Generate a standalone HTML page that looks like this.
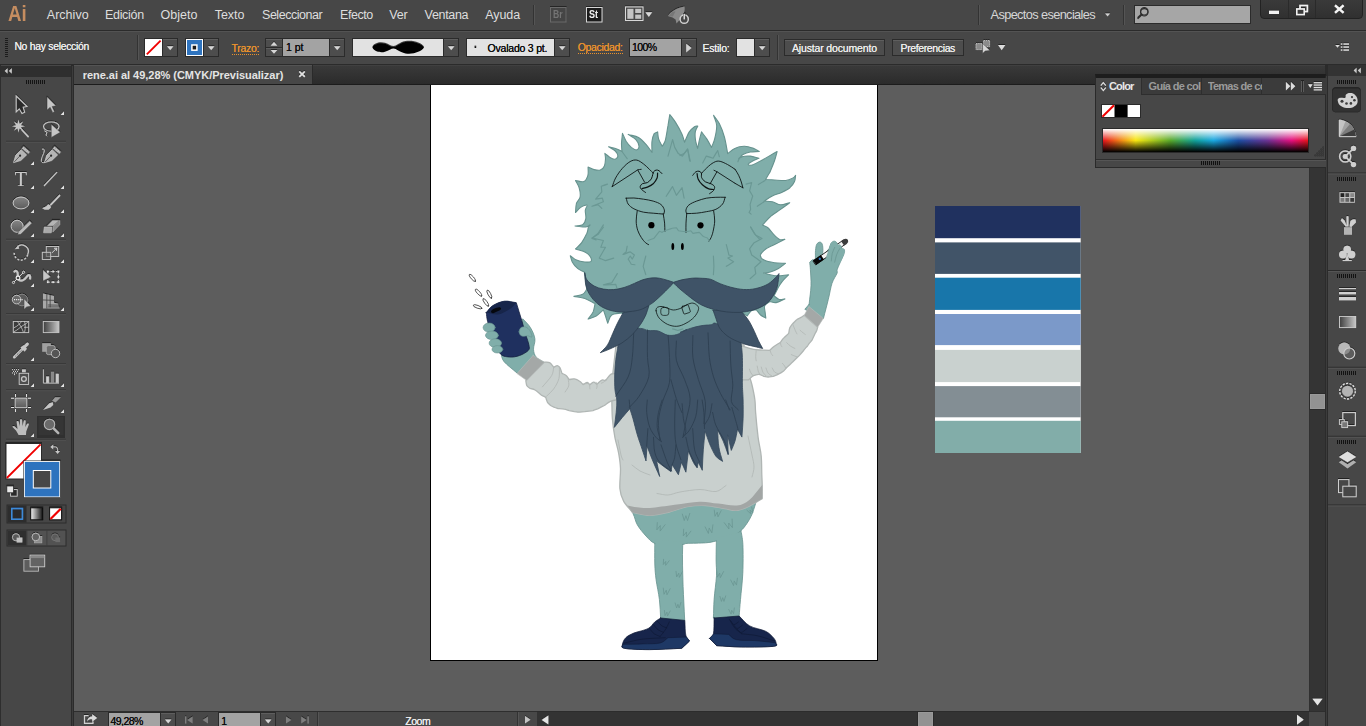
<!DOCTYPE html>
<html lang="es">
<head>
<meta charset="utf-8">
<title>rene.ai al 49,28% (CMYK/Previsualizar)</title>
<style>
*{box-sizing:border-box;margin:0;padding:0}
html,body{width:1366px;height:726px;overflow:hidden;background:#5d5d5d}
body{position:relative;font-family:"Liberation Sans",sans-serif;color:#e0e0e0;font-size:11px;-webkit-font-smoothing:antialiased}
.abs,.t,.bx{position:absolute}
.t{white-space:nowrap;line-height:1;display:block}
#menubar{left:0;top:0;width:1366px;height:30px;background:#474747}
#ctrlbar{left:0;top:30px;width:1366px;height:35px;background:#474747;border-top:1px solid #2b2b2b;border-bottom:1px solid #2b2b2b;box-shadow:inset 0 1px 0 #535353}
#tabrow{left:0;top:65px;width:1366px;height:20px;background:linear-gradient(#3a3a3a,#2b2b2b);border-bottom:1px solid #1c1c1c;box-shadow:inset 0 1px 0 #404040}
#tab{left:74px;top:65px;width:239px;height:19px;background:#474747;border-right:1px solid #2a2a2a;box-shadow:inset 0 1px 0 #545454}
#tools{left:0;top:65px;width:74px;height:661px;background:#474747;border-right:3px solid #2b2b2b;border-left:1px solid #2e2e2e}
#toolshead{left:1px;top:66px;width:70px;height:11px;background:#2f2f2f}
#canvas{left:74px;top:85px;width:1235px;height:626px;background:#5d5d5d}
#artboard{left:430px;top:84px;width:448px;height:577px;background:#fff;border:1px solid #000}
#status{left:74px;top:711px;width:1251px;height:15px;background:#484848;border-top:1px solid #2e2e2e}
#hscroll{left:537px;top:711px;width:772px;height:15px;background:#333;border-top:1px solid #2c2c2c}
#vscroll{left:1309px;top:85px;width:16px;height:626px;background:#343434;border-left:1px solid #303030}
#dock{left:1325px;top:65px;width:41px;height:661px;background:#474747;border-left:3px solid #2b2b2b}
#dockhead{left:1328px;top:65px;width:38px;height:11px;background:#333}
.thumb{background:#929292;border:1px solid #999;box-shadow:0 0 0 1px #2a2a2a}
.inp{background:#a3a3a3;border:1px solid #2b2b2b;color:#111}
.btn{background:#4d4d4d;border:1px solid #2b2b2b;box-shadow:inset 0 1px 0 #5e5e5e}
.lite{background:#e2e2e2;border:1px solid #2b2b2b}
.sep{width:1px;background:#333;box-shadow:1px 0 0 #555}
.menu{color:#dcdcdc;font-size:12.5px}
.lab{color:#e6e6e6;font-size:10px}
.or{color:#e8912d;font-size:10px;border-bottom:1px dotted #e8912d;padding-bottom:1px}
.dk{color:#101010;font-size:10px}
.b{font-weight:bold}
svg{position:absolute;left:0;top:0;overflow:visible}
</style>
</head>
<body>

<div id="canvas" class="abs"></div>
<div id="artboard" class="abs"></div>
<svg id="swatches" width="1366" height="726" viewBox="0 0 1366 726">
<rect x="935" y="206" width="145.7" height="247" fill="#fff"/>
<rect x="935" y="206" width="145.7" height="32.2" fill="#20315f"/>
<rect x="935" y="242.4" width="145.7" height="31.5" fill="#415468"/>
<rect x="935" y="277.7" width="145.7" height="32.2" fill="#1876aa"/>
<rect x="935" y="314" width="145.7" height="31.1" fill="#7b99c9"/>
<rect x="935" y="349.9" width="145.7" height="32.2" fill="#c9d1cf"/>
<rect x="935" y="386.1" width="145.7" height="31.2" fill="#838e94"/>
<rect x="935" y="420.8" width="145.7" height="32.2" fill="#82ada9"/>
</svg>
<svg id="monster" width="1366" height="726" viewBox="0 0 1366 726" stroke-linejoin="round" stroke-linecap="round">
<path d="M654.8 539.7C654.8 547.8 654.6 557.3 654.8 564.0C655.0 570.6 655.4 573.8 656.1 579.8C656.9 585.7 658.6 592.9 659.4 599.5C660.2 606.1 660.3 612.7 660.7 619.3C668.7 619.7 676.7 620.2 684.7 620.6C684.2 609.2 683.5 596.5 683.1 586.4C682.8 576.3 682.5 567.6 682.5 560.0C682.4 552.4 682.7 547.3 682.8 540.9C673.4 540.5 664.1 540.1 654.8 539.7Z" fill="#80aeaa" stroke="#66928e" stroke-width="0.8"/>
<path d="M716.4 537.2C716.3 544.8 716.1 553.6 716.1 560.0C716.1 566.4 716.8 569.2 716.5 575.8C716.1 582.4 714.6 592.5 714.1 599.5C713.6 606.6 713.7 611.8 713.4 618.0C722.0 617.6 730.6 617.3 739.1 616.9C739.6 611.1 739.8 606.8 740.5 599.5C741.1 592.2 742.4 582.3 742.8 573.2C743.2 564.0 743.2 552.1 742.9 544.7C742.5 537.2 741.4 533.9 740.6 528.5C732.5 531.4 724.5 534.3 716.4 537.2Z" fill="#80aeaa" stroke="#66928e" stroke-width="0.8"/>
<path d="M624.9 499.9C627.6 504.4 630.9 509.4 633.0 513.6C635.1 517.7 635.2 521.0 637.3 524.8C639.5 528.5 643.1 532.9 646.0 536.0C649.0 539.1 651.0 541.9 654.8 543.4C658.5 545.0 663.8 545.1 668.5 545.3C673.1 545.5 679.7 544.7 682.8 544.4C685.9 544.1 683.3 543.7 687.1 543.4C691.0 543.2 700.9 543.2 705.8 542.8C710.7 542.4 712.2 541.9 716.4 540.9C720.5 540.0 726.6 538.9 730.7 537.2C734.7 535.5 737.9 533.3 740.6 531.0C743.3 528.7 745.0 526.2 746.9 523.5C748.7 520.8 750.4 518.1 751.8 514.8C753.3 511.5 754.3 507.3 755.6 503.6C755.6 500.7 755.6 497.8 755.6 494.9C732.8 492.8 708.9 488.7 687.1 488.7C665.3 488.7 645.6 492.8 624.9 494.9C624.9 496.6 624.9 498.2 624.9 499.9Z" fill="#80aeaa" stroke="#66928e" stroke-width="0.8"/>
<path d="M655.4 539.7C664.3 540.3 673.2 540.9 682.1 541.6C682.1 544.3 682.1 547.0 682.1 549.7C673.2 549.7 664.3 549.7 655.4 549.7C655.4 546.3 655.4 543.0 655.4 539.7Z" fill="#80aeaa"/>
<path d="M717.0 537.8C724.7 536.0 732.3 534.1 740.0 532.2C740.6 537.6 741.3 543.0 741.9 548.4C733.6 548.4 725.3 548.4 717.0 548.4C717.0 544.9 717.0 541.4 717.0 537.8Z" fill="#80aeaa"/>
<path d="M660.7 618.0C658.8 619.3 656.9 620.2 654.8 621.9C652.7 623.7 651.7 626.7 648.2 628.5C644.7 630.4 637.5 631.6 633.7 633.1C630.0 634.7 627.7 635.9 625.8 637.7C623.9 639.6 622.7 642.6 622.5 644.3C622.3 646.1 620.0 647.4 624.5 648.3C629.0 649.2 640.0 649.6 649.5 649.6C659.1 649.6 671.1 648.7 681.8 648.3C684.4 645.9 686.9 643.5 689.5 641.0C688.2 639.1 686.5 638.6 685.8 635.1C685.0 631.7 685.2 625.3 684.8 620.4C676.8 619.6 668.8 618.8 660.7 618.0Z" fill="#17254b" stroke="#0e1833" stroke-width="0.7"/>
<path d="M622.9 644.3C623.4 645.7 620.1 647.4 624.5 648.3C628.9 649.2 640.0 649.6 649.5 649.6C659.1 649.6 671.1 648.7 681.8 648.3C684.4 645.9 686.9 643.5 689.5 641.0C688.5 639.7 687.6 638.4 686.7 637.1C680.5 637.3 674.2 637.5 668.0 637.7C665.3 639.5 664.2 642.0 660.1 643.0C655.9 644.0 649.1 643.7 642.9 643.9C636.7 644.2 629.6 644.2 622.9 644.3Z" fill="#1e3865" stroke="#0e1833" stroke-width="0.5"/>
<path d="M714.1 618.0C722.4 617.3 730.8 616.7 739.1 616.0C742.6 619.3 745.3 623.4 749.7 625.9C754.1 628.4 761.5 629.2 765.5 631.2C769.4 633.1 771.6 635.8 773.4 637.7C775.2 639.7 776.0 641.6 776.0 643.0C776.0 644.4 779.1 645.7 773.4 646.3C767.7 647.0 751.2 647.1 741.8 647.0C732.3 646.9 725.1 646.1 716.7 645.7C714.3 643.2 711.9 640.8 709.5 638.4C710.8 636.9 712.7 637.2 713.4 633.8C714.2 630.4 713.9 623.2 714.1 618.0Z" fill="#17254b" stroke="#0e1833" stroke-width="0.7"/>
<path d="M709.5 638.4C711.9 640.8 714.3 643.2 716.7 645.7C725.1 646.1 732.3 646.9 741.8 647.0C751.2 647.1 767.7 647.0 773.4 646.3C779.1 645.6 775.2 643.9 776.0 642.8C769.0 642.0 761.5 641.1 754.9 640.6C748.4 640.1 740.9 640.8 736.5 639.7C732.1 638.7 731.2 636.2 728.6 634.4C723.7 634.2 718.8 634.0 713.8 633.8C712.4 635.3 710.9 636.9 709.5 638.4Z" fill="#1e3865" stroke="#0e1833" stroke-width="0.5"/>
<path d="M649.5 628.5C651.1 630.3 652.4 632.5 654.1 633.8C655.9 635.1 658.1 635.5 660.1 636.4" fill="none" stroke="#0e1833" stroke-width="0.6"/>
<path d="M653.5 624.6C655.0 626.3 656.4 628.6 658.1 629.8C659.7 631.1 661.6 631.4 663.4 632.2" fill="none" stroke="#0e1833" stroke-width="0.6"/>
<path d="M657.4 621.3C659.0 622.8 660.5 624.8 662.0 625.9C663.6 627.0 665.1 627.2 666.7 627.9" fill="none" stroke="#0e1833" stroke-width="0.6"/>
<path d="M660.1 636.4C661.8 634.2 663.8 632.3 665.3 629.8C666.9 627.4 668.0 624.6 669.3 621.9" fill="none" stroke="#0e1833" stroke-width="0.6"/>
<path d="M624.5 643.0C630.6 641.7 636.1 639.9 642.9 639.1C649.8 638.2 657.9 638.2 665.3 637.7" fill="none" stroke="#0e1833" stroke-width="0.6"/>
<path d="M730.6 620.6C731.7 621.9 732.5 624.3 733.9 624.6C735.2 624.8 736.9 622.8 738.5 621.9" fill="none" stroke="#0e1833" stroke-width="0.6"/>
<path d="M733.9 625.2C735.0 626.3 735.7 628.5 737.2 628.5C738.6 628.5 740.7 626.3 742.4 625.2" fill="none" stroke="#0e1833" stroke-width="0.6"/>
<path d="M737.2 629.2C738.5 630.3 739.5 632.6 741.1 632.5C742.8 632.4 745.1 629.8 747.0 628.5" fill="none" stroke="#0e1833" stroke-width="0.6"/>
<path d="M729.3 619.3C731.2 622.4 733.1 626.1 735.2 628.5C737.3 630.9 739.6 632.0 741.8 633.8" fill="none" stroke="#0e1833" stroke-width="0.6"/>
<path d="M741.8 633.8C747.0 634.4 752.1 634.6 757.6 635.8C763.1 637.0 769.0 639.3 774.7 641.0" fill="none" stroke="#0e1833" stroke-width="0.6"/>
<path d="M-2.2 -2 L-1 2 L0 -1 L1 2 L2.4 -2.4" transform="translate(685.9 517.3) rotate(0) scale(1.625)" fill="none" stroke="#6b9793" stroke-width="0.85" vector-effect="non-scaling-stroke"/>
<path d="M-2.2 -2 L-1 2 L0 -1 L1 2 L2.4 -2.4" transform="translate(717.0 513.6) rotate(10) scale(1.5)" fill="none" stroke="#6b9793" stroke-width="0.85" vector-effect="non-scaling-stroke"/>
<path d="M-2.2 -2 L-1 2 L0 -1 L1 2 L2.4 -2.4" transform="translate(659.7 527.2) rotate(20) scale(1.75)" fill="none" stroke="#6b9793" stroke-width="0.85" vector-effect="non-scaling-stroke"/>
<path d="M-2.2 -2 L-1 2 L0 -1 L1 2 L2.4 -2.4" transform="translate(685.9 533.5) rotate(20) scale(1.625)" fill="none" stroke="#6b9793" stroke-width="0.85" vector-effect="non-scaling-stroke"/>
<path d="M-2.2 -2 L-1 2 L0 -1 L1 2 L2.4 -2.4" transform="translate(709.5 529.7) rotate(-10) scale(1.75)" fill="none" stroke="#6b9793" stroke-width="0.85" vector-effect="non-scaling-stroke"/>
<path d="M-2.2 -2 L-1 2 L0 -1 L1 2 L2.4 -2.4" transform="translate(729.4 524.8) rotate(-20) scale(1.875)" fill="none" stroke="#6b9793" stroke-width="0.85" vector-effect="non-scaling-stroke"/>
<path d="M-2.2 -2 L-1 2 L0 -1 L1 2 L2.4 -2.4" transform="translate(750.6 511.1) rotate(-30) scale(1.25)" fill="none" stroke="#6b9793" stroke-width="0.85" vector-effect="non-scaling-stroke"/>
<path d="M-2.2 -2 L-1 2 L0 -1 L1 2 L2.4 -2.4" transform="translate(665.3 562.6) rotate(20) scale(1.25)" fill="none" stroke="#6b9793" stroke-width="0.85" vector-effect="non-scaling-stroke"/>
<path d="M-2.2 -2 L-1 2 L0 -1 L1 2 L2.4 -2.4" transform="translate(678.5 574.5) rotate(10) scale(1.375)" fill="none" stroke="#6b9793" stroke-width="0.85" vector-effect="non-scaling-stroke"/>
<path d="M-2.2 -2 L-1 2 L0 -1 L1 2 L2.4 -2.4" transform="translate(666.0 591.6) rotate(10) scale(1.5)" fill="none" stroke="#6b9793" stroke-width="0.85" vector-effect="non-scaling-stroke"/>
<path d="M-2.2 -2 L-1 2 L0 -1 L1 2 L2.4 -2.4" transform="translate(677.9 605.5) rotate(0) scale(1.25)" fill="none" stroke="#6b9793" stroke-width="0.85" vector-effect="non-scaling-stroke"/>
<path d="M-2.2 -2 L-1 2 L0 -1 L1 2 L2.4 -2.4" transform="translate(666.7 613.4) rotate(10) scale(1.25)" fill="none" stroke="#6b9793" stroke-width="0.85" vector-effect="non-scaling-stroke"/>
<path d="M-2.2 -2 L-1 2 L0 -1 L1 2 L2.4 -2.4" transform="translate(719.4 574.5) rotate(10) scale(1.5)" fill="none" stroke="#6b9793" stroke-width="0.85" vector-effect="non-scaling-stroke"/>
<path d="M-2.2 -2 L-1 2 L0 -1 L1 2 L2.4 -2.4" transform="translate(734.5 582.4) rotate(-10) scale(1.5)" fill="none" stroke="#6b9793" stroke-width="0.85" vector-effect="non-scaling-stroke"/>
<path d="M-2.2 -2 L-1 2 L0 -1 L1 2 L2.4 -2.4" transform="translate(722.7 598.9) rotate(0) scale(1.25)" fill="none" stroke="#6b9793" stroke-width="0.85" vector-effect="non-scaling-stroke"/>
<path d="M-2.2 -2 L-1 2 L0 -1 L1 2 L2.4 -2.4" transform="translate(731.9 611.4) rotate(-10) scale(1.25)" fill="none" stroke="#6b9793" stroke-width="0.85" vector-effect="non-scaling-stroke"/>
<path d="M613.0 372.0C612.4 377.3 611.5 383.3 611.3 388.0C611.1 392.7 611.6 394.9 611.8 400.0C612.0 405.1 611.9 412.5 612.4 418.7C612.9 424.9 613.8 431.5 614.9 437.3C616.0 443.1 617.8 448.3 618.7 453.5C619.6 458.7 620.3 462.6 620.5 468.5C620.7 474.4 619.4 483.3 619.9 488.7C620.4 494.1 621.5 497.2 623.6 501.1C625.7 505.0 629.5 508.6 632.4 512.3C638.2 513.3 643.8 515.4 649.8 515.4C655.8 515.4 662.3 513.8 668.5 512.3C674.7 510.8 680.9 507.8 687.1 506.7C693.3 505.6 699.6 505.2 705.8 505.5C712.0 505.8 719.3 507.8 724.5 508.6C729.7 509.4 732.8 510.8 736.9 510.4C741.0 510.0 745.1 508.1 749.3 506.1C753.5 504.1 757.9 501.1 762.2 498.6C762.2 494.0 762.3 488.9 762.2 484.9C762.1 480.9 762.0 479.5 761.8 474.7C761.6 469.9 761.8 462.2 761.2 456.0C760.6 449.8 759.0 444.6 758.1 437.3C757.2 430.0 756.1 418.6 755.6 412.4C755.1 406.2 755.5 404.6 754.9 400.0C754.3 395.4 753.1 389.7 752.0 385.0C750.9 380.3 749.3 376.3 748.0 372.0C746.7 363.0 745.3 354.0 744.0 345.0C722.7 340.0 701.3 335.0 680.0 330.0C658.7 335.0 637.3 340.0 616.0 345.0C615.0 354.0 614.0 363.0 613.0 372.0Z" fill="#c9d0ce" stroke="#b0b6b4" stroke-width="1.3"/>
<path d="M627.5 505.5C630.7 506.1 633.3 506.9 637.0 507.3C640.7 507.7 643.5 508.4 649.8 508.0C656.1 507.6 666.4 505.9 674.7 504.8C683.0 503.8 692.4 501.9 699.6 501.7C706.9 501.5 712.0 503.0 718.2 503.6C724.4 504.2 731.7 506.1 736.9 505.5C742.1 504.9 745.1 503.3 749.3 499.9C753.5 496.5 757.9 489.9 762.2 484.9C762.2 489.5 762.2 494.0 762.2 498.6C757.9 501.1 753.5 504.1 749.3 506.1C745.1 508.1 741.0 510.0 736.9 510.4C732.8 510.8 729.7 509.4 724.5 508.6C719.3 507.8 712.0 505.8 705.8 505.5C699.6 505.2 693.3 505.6 687.1 506.7C680.9 507.8 674.7 510.8 668.5 512.3C662.3 513.8 655.8 515.3 649.8 515.4C643.8 515.5 638.2 513.5 632.4 512.6C630.8 510.2 629.1 507.9 627.5 505.5Z" fill="#a2a6a5"/>
<path d="M657.0 493.5C660.7 494.0 664.2 495.2 668.0 495.0C671.8 494.8 674.7 492.9 680.0 492.0C685.3 491.1 694.0 489.6 700.0 489.5C706.0 489.4 711.7 492.2 716.0 491.5C720.3 490.8 722.7 487.5 726.0 485.5" fill="none" stroke="#b0b6b4" stroke-width="0.8"/>
<path d="M632.0 465.0C634.7 467.0 637.0 469.3 640.0 471.0C643.0 472.7 646.7 473.7 650.0 475.0" fill="none" stroke="#b0b6b4" stroke-width="0.8"/>
<path d="M748.0 436.0C749.3 442.3 751.0 449.8 752.0 455.0C753.0 460.2 754.0 463.3 754.0 467.0C754.0 470.7 752.7 473.7 752.0 477.0" fill="none" stroke="#b0b6b4" stroke-width="0.8"/>
<path d="M618.0 440.0C619.0 445.0 620.2 451.7 621.0 455.0C621.8 458.3 622.3 458.3 623.0 460.0" fill="none" stroke="#b0b6b4" stroke-width="0.8"/>
<path d="M501.0 353.4C502.0 356.1 501.4 358.4 504.1 361.7C506.8 364.9 512.7 369.2 517.0 373.0C526.0 369.4 534.9 365.8 543.9 362.2C541.3 360.5 537.8 359.2 536.1 357.0C534.4 354.9 533.7 352.3 533.5 349.3C533.3 346.2 535.4 342.5 534.9 338.9C534.4 335.3 532.5 330.9 530.4 327.6C528.4 324.2 525.3 321.7 522.7 318.8C521.7 322.7 519.8 326.4 519.6 330.7C519.4 334.9 524.8 340.3 521.7 344.1C518.6 347.9 507.9 350.3 501.0 353.4Z" fill="#80aeaa" stroke="#66928e" stroke-width="0.8"/>
<path d="M486.3 312.5C486.7 315.5 486.6 317.3 487.6 321.4C488.6 325.5 490.4 331.7 492.5 337.0C494.6 342.3 497.2 350.1 500.0 353.4C502.8 356.7 506.0 356.6 509.3 357.0C512.6 357.4 516.4 356.6 519.6 355.5C522.8 354.4 526.9 352.0 528.4 350.3C529.9 348.6 529.3 347.7 528.9 345.1C528.5 342.5 527.0 338.9 525.8 334.8C524.6 330.7 523.3 325.7 521.7 320.3C520.1 314.9 518.1 308.6 516.3 302.7C512.3 302.2 508.3 300.7 504.4 301.2C500.5 301.7 496.0 303.6 493.0 305.5C490.0 307.4 488.5 310.2 486.3 312.5Z" fill="#1f305f" stroke="#14203f" stroke-width="0.8"/>
<path d="M486.3 312.5C488.5 310.2 490.0 307.4 493.0 305.5C496.0 303.6 500.5 301.7 504.4 301.2C508.3 300.7 512.3 302.2 516.3 302.7C514.2 304.8 513.0 307.0 510.0 309.0C506.9 311.0 501.9 313.9 498.0 314.5C494.1 315.1 490.2 313.2 486.3 312.5Z" fill="#17254a"/>
<path d="M491.0 311.5C491.2 310.8 492.6 309.5 494.0 308.8C495.4 308.1 498.3 307.2 499.5 307.3C500.7 307.4 501.4 308.6 501.0 309.3C500.6 310.0 498.3 310.9 497.0 311.6C495.7 312.3 494.0 313.3 493.0 313.3C492.0 313.3 490.8 312.2 491.0 311.5Z" fill="#05070d"/>
<ellipse cx="489.1" cy="327.6" rx="6.0" ry="4.6" fill="#80aeaa" stroke="#66928e" stroke-width="0.6"/>
<ellipse cx="491.9" cy="335.3" rx="6.4" ry="4.3" fill="#80aeaa" stroke="#66928e" stroke-width="0.6"/>
<ellipse cx="495.3" cy="343.1" rx="6.2" ry="4.3" fill="#80aeaa" stroke="#66928e" stroke-width="0.6"/>
<ellipse cx="497.4" cy="349.3" rx="5.4" ry="3.7" fill="#80aeaa" stroke="#66928e" stroke-width="0.6"/>
<path d="M519.1 331.7C519.2 330.4 520.0 328.3 521.1 327.6C522.3 326.8 524.3 326.5 525.8 327.0C527.3 327.6 528.9 329.0 529.9 330.7C531.0 332.3 532.3 336.0 532.0 336.9C531.6 337.7 529.2 335.9 527.9 335.8C526.5 335.7 524.9 336.4 523.7 336.3C522.5 336.3 521.4 336.1 520.6 335.3C519.9 334.5 519.0 333.0 519.1 331.7Z" fill="#80aeaa" stroke="#66928e" stroke-width="0.6"/>
<ellipse cx="472.4" cy="277.9" rx="4.6" ry="1.4" transform="rotate(50 472.4 277.9)" fill="#fff" stroke="#222" stroke-width="0.7"/>
<ellipse cx="478.6" cy="292.7" rx="4.6" ry="1.4" transform="rotate(48 478.6 292.7)" fill="#fff" stroke="#222" stroke-width="0.7"/>
<ellipse cx="489.4" cy="294.2" rx="4.6" ry="1.4" transform="rotate(62 489.4 294.2)" fill="#fff" stroke="#222" stroke-width="0.7"/>
<ellipse cx="485.8" cy="302.4" rx="4.6" ry="1.4" transform="rotate(55 485.8 302.4)" fill="#fff" stroke="#222" stroke-width="0.7"/>
<ellipse cx="477.6" cy="306.8" rx="4.6" ry="1.4" transform="rotate(20 477.6 306.8)" fill="#fff" stroke="#222" stroke-width="0.7"/>
<path d="M544.4 362.1C546.1 362.2 548.0 361.7 549.6 362.6C551.1 363.4 552.3 365.7 553.7 367.2C554.9 366.7 556.3 365.6 557.3 365.7C558.4 365.8 559.1 366.5 559.9 367.7C560.7 369.0 561.3 371.5 562.0 373.4C563.4 374.1 564.9 374.5 566.1 375.5C567.3 376.5 568.2 378.3 569.2 379.6C570.9 379.4 572.7 378.6 574.4 378.9C576.1 379.2 578.1 380.2 579.6 381.2C581.0 382.1 582.0 383.5 583.2 384.6C584.5 383.9 586.2 382.5 587.3 382.5C588.4 382.6 589.0 384.0 589.9 384.8C591.1 383.9 592.3 382.3 593.5 382.2C594.7 382.1 595.8 383.6 596.9 384.3C598.5 382.9 600.3 380.7 601.8 380.1C603.2 379.5 604.3 380.5 605.6 380.7C607.2 378.6 609.1 375.6 610.5 374.5C612.0 373.3 612.6 374.0 614.2 373.6C615.7 373.3 618.0 372.8 619.8 372.4C619.8 381.4 619.8 390.3 619.8 399.3C616.7 399.9 613.1 400.3 610.5 401.3C608.0 402.4 606.4 404.1 604.3 405.5C602.3 406.5 600.0 407.7 598.2 408.6C596.3 409.4 594.7 409.9 593.0 410.6C590.2 411.0 587.1 411.4 584.7 411.7C582.3 411.9 580.6 412.0 578.5 412.2C577.1 412.0 575.9 411.9 574.4 411.7C572.8 411.4 570.9 411.0 569.2 410.6C567.5 410.1 566.0 409.4 564.1 409.1C562.2 408.7 559.9 408.7 557.9 408.6C556.8 408.2 556.0 408.0 554.8 407.5C553.6 407.0 551.8 406.3 550.6 405.5C549.4 404.6 548.6 403.4 547.5 402.4C547.2 401.5 546.8 400.6 546.5 399.8C546.1 398.9 546.3 398.0 545.5 397.2C544.6 396.4 542.7 395.8 541.3 395.1C539.3 393.4 537.0 391.1 535.1 390.0C533.2 388.8 531.7 388.9 530.0 388.4C528.9 387.6 527.6 387.1 526.9 385.8C526.2 384.5 526.2 382.4 525.8 380.7C532.0 374.5 538.2 368.3 544.4 362.1Z" fill="#c9d0ce" stroke="#b0b6b4" stroke-width="1.3"/>
<path d="M533.1 355.4C536.8 357.7 540.6 360.0 544.4 362.3C538.5 368.3 532.6 374.4 526.7 380.5C523.5 378.2 520.3 375.9 517.0 373.6C522.4 367.5 527.7 361.4 533.1 355.4Z" fill="#a4a8a7" stroke="#b9bdbc" stroke-width="0.6"/>
<path d="M809.1 304.3C809.7 298.2 810.8 291.5 811.0 285.8C811.2 280.0 810.6 273.6 810.4 269.7C810.2 265.7 809.9 264.7 809.7 262.2C810.6 261.4 811.5 260.3 812.4 259.8C813.3 259.2 814.7 260.7 815.2 259.1C815.7 257.6 815.2 252.9 815.5 250.5C815.8 248.0 816.0 245.7 816.7 244.3C817.5 242.9 818.9 242.1 819.8 242.1C820.8 242.1 821.8 242.9 822.3 244.3C822.8 245.7 822.9 248.4 822.9 250.5C822.9 252.5 822.5 254.6 822.3 256.7C824.6 254.0 826.9 251.3 829.1 248.6C829.8 246.8 830.2 244.6 831.0 243.3C831.8 242.1 832.9 241.4 833.8 241.2C834.7 241.0 835.6 241.5 836.3 242.1C836.9 242.7 837.3 243.7 837.8 244.6C838.4 244.5 839.1 244.1 839.7 244.4C840.3 244.6 841.2 245.4 841.5 246.1C841.8 246.8 841.5 247.8 841.4 248.6C842.2 248.7 843.2 248.5 843.7 248.9C844.2 249.3 844.6 249.8 844.6 250.8C844.6 251.8 844.4 252.9 843.7 254.8C843.0 256.7 841.4 259.8 840.3 262.2C839.2 264.7 837.7 267.8 837.2 269.7C836.6 271.5 837.9 271.1 837.0 273.4C836.1 275.6 833.5 278.9 832.0 283.3C830.6 287.6 829.8 293.5 828.3 299.4C826.9 305.3 825.0 312.2 823.4 318.6C817.2 315.5 811.0 312.4 804.8 309.3C806.2 307.7 807.7 306.0 809.1 304.3Z" fill="#80aeaa" stroke="#66928e" stroke-width="0.8"/>
<path d="M741.2 345.8C746.0 347.1 750.9 348.9 755.7 349.6C760.4 350.4 765.0 350.0 769.6 350.3C771.2 348.9 772.5 347.7 774.3 346.3C776.1 345.0 778.4 343.6 780.5 342.2C781.5 340.8 782.2 339.5 783.6 338.1C784.9 336.6 787.0 335.0 788.7 333.4C789.1 331.5 789.2 329.3 789.8 327.7C790.4 326.2 791.5 325.3 792.3 324.1C793.9 322.6 795.5 320.6 797.0 319.5C798.5 318.3 799.9 318.1 801.1 317.4C802.3 316.7 803.2 316.0 804.2 315.3C808.7 319.3 813.2 323.3 817.7 327.2C817.3 328.4 817.1 329.8 816.6 330.8C816.2 331.9 815.6 332.6 815.1 333.4C814.6 334.6 814.0 335.9 813.5 337.0C813.0 338.1 812.5 339.1 812.0 340.1C811.1 341.2 810.2 342.2 809.4 343.2C808.6 344.3 808.0 345.3 807.3 346.3C806.6 347.0 805.9 347.6 805.3 348.4C804.6 349.2 803.9 350.1 803.2 351.0C802.2 352.2 801.1 353.5 800.1 354.6C799.1 355.7 798.0 356.7 797.0 357.7C795.6 359.1 794.6 360.2 792.9 361.8C791.1 363.5 788.7 365.6 786.7 367.5C785.6 368.7 784.9 370.0 783.6 371.1C782.2 372.2 780.1 373.4 778.4 374.2C776.7 375.1 774.9 375.6 773.2 376.3C771.5 376.5 769.6 377.0 768.1 377.0C766.5 377.0 765.3 376.5 763.9 376.3C762.2 375.7 760.3 374.6 758.8 374.4C757.2 374.3 756.0 375.0 754.6 375.3C753.9 375.6 753.6 375.5 752.6 376.3C751.5 377.1 749.8 378.7 748.4 379.9C746.0 379.9 743.6 379.9 741.2 379.9C741.2 368.5 741.2 357.2 741.2 345.8Z" fill="#c9d0ce" stroke="#b0b6b4" stroke-width="1.3"/>
<path d="M804.2 315.3C805.8 312.4 807.3 309.5 808.9 306.5C813.7 310.5 818.5 314.5 823.3 318.4C821.4 321.4 819.5 324.3 817.7 327.2C813.2 323.3 808.7 319.3 804.2 315.3Z" fill="#a4a8a7" stroke="#b9bdbc" stroke-width="0.6"/>
<g transform="translate(814.6 262.7) rotate(-34.6)"><rect x="0" y="-2.3" width="36" height="4.6" fill="#f4f4f4" stroke="#111" stroke-width="0.8"/><rect x="0" y="-2.8" width="9.5" height="5.6" fill="#050505"/><circle cx="6.5" cy="-0.2" r="1.2" fill="#2d6fb5"/><path d="M34 -2.6 L37 -2.9 Q40.5 -2 40.3 0.3 Q40 2.6 37 2.9 L34 2.6Z" fill="#3c3c3c"/></g>
<path d="M829.1 248.6C829.8 246.8 830.2 244.6 831.0 243.3C831.8 242.1 832.9 241.4 833.8 241.2C834.7 241.0 835.6 241.5 836.3 242.1C836.9 242.7 837.3 243.7 837.8 244.6C838.4 244.5 839.1 244.1 839.7 244.4C840.3 244.6 841.2 245.4 841.5 246.1C841.8 246.8 841.5 247.8 841.4 248.6C842.2 248.7 843.2 248.5 843.7 248.9C844.2 249.3 844.6 249.8 844.6 250.8C844.6 251.8 844.4 252.9 843.7 254.8C843.0 256.7 841.8 260.6 840.3 262.2C838.8 263.9 837.0 265.2 834.7 264.7C832.4 264.2 827.9 261.0 826.7 259.1C825.4 257.3 826.9 255.3 827.3 253.6C827.7 251.8 828.5 250.3 829.1 248.6Z" fill="#80aeaa"/>
<path d="M834.7 247.4C833.9 249.4 832.8 251.3 832.2 253.6C831.7 255.8 831.6 258.5 831.3 261.0" fill="none" stroke="#66928e" stroke-width="0.7"/>
<path d="M839.7 248.6C838.6 250.7 837.4 252.5 836.6 254.8C835.8 257.1 835.3 259.8 834.7 262.2" fill="none" stroke="#66928e" stroke-width="0.7"/>
<path d="M622.0 312.9C618.5 313.6 614.0 313.2 611.7 315.0C609.3 316.7 609.0 320.5 607.7 323.2C607.0 320.8 606.2 318.2 605.5 316.0C604.7 313.8 604.1 311.9 603.4 309.8C601.0 311.9 598.7 314.4 596.2 316.0C593.6 317.5 590.8 318.1 588.1 319.1C589.8 316.7 591.9 314.4 593.1 311.9C594.2 309.3 594.4 306.4 595.1 303.6C591.7 301.9 588.3 299.6 584.8 298.4C581.3 297.2 577.6 297.1 573.9 296.4C576.9 295.7 580.6 295.5 582.7 294.3C584.9 293.1 585.5 290.9 586.9 289.1C586.0 283.4 585.1 277.7 584.3 272.0C582.0 270.8 579.5 270.0 577.6 268.4C575.6 266.8 573.6 264.3 572.4 262.2C571.2 260.1 571.0 257.9 570.3 255.8C572.4 257.2 574.1 259.1 576.5 260.1C578.9 261.2 582.4 261.8 584.8 262.0C587.2 262.2 590.0 262.2 591.0 261.4C591.9 260.5 591.3 258.5 590.5 257.0C589.6 255.5 588.3 253.7 585.8 252.4C583.3 251.0 578.9 250.1 575.5 249.0C577.6 246.8 579.8 245.2 581.7 242.6C583.6 239.9 585.7 235.8 586.9 233.3C588.0 230.7 587.9 228.5 588.4 227.1C588.9 225.7 590.4 224.9 590.0 224.9C589.5 224.9 588.3 226.8 585.8 227.0C583.3 227.2 578.6 226.3 575.0 226.0C577.6 225.5 580.9 225.9 582.7 224.7C584.5 223.5 585.4 221.1 585.8 218.7C586.3 216.3 585.1 212.7 585.3 210.5C585.5 208.2 587.8 205.6 587.1 205.1C586.3 204.6 582.6 206.1 580.7 207.4C578.7 208.6 577.2 210.8 575.5 212.5C575.8 209.4 575.8 205.8 576.5 203.2C577.3 200.6 579.7 199.6 580.1 197.0C580.6 194.4 579.9 190.5 579.1 187.7C578.3 185.0 576.7 182.9 575.5 180.5C578.3 180.8 581.7 182.4 583.8 181.5C585.8 180.7 587.2 177.7 587.9 175.3C588.6 172.9 588.0 169.8 588.1 167.1C590.1 167.9 592.1 169.1 594.1 169.6C596.1 170.1 598.6 170.7 600.3 170.1C602.0 169.5 603.6 167.9 604.4 166.0C605.3 164.1 605.4 160.8 605.5 158.7C605.5 156.6 605.1 155.1 604.9 153.4C606.5 154.6 608.0 156.2 609.6 157.2C611.2 158.2 613.4 159.4 614.8 159.2C616.1 159.1 617.8 157.5 617.9 156.1C617.9 154.8 616.8 152.5 615.3 151.0C613.7 149.4 610.8 148.2 608.6 146.8C611.3 147.5 614.6 148.1 616.8 148.9C619.1 149.7 620.3 150.6 622.0 151.5C621.8 148.7 621.4 146.2 621.5 143.2C621.6 140.2 622.2 136.7 622.5 133.4C623.7 136.0 624.7 138.8 626.1 141.2C627.6 143.5 629.6 145.9 631.3 147.4C633.0 148.8 635.2 150.1 636.5 149.9C637.7 149.8 639.1 148.0 639.0 146.3C639.0 144.6 637.7 141.6 635.9 139.6C634.1 137.6 630.8 136.2 628.2 134.4C631.6 135.5 635.4 135.7 638.5 137.5C641.6 139.4 644.5 142.8 646.8 145.3C649.0 147.8 650.2 150.1 652.0 152.5C652.0 148.7 651.6 144.3 652.0 141.2C652.3 138.1 653.1 135.5 654.0 133.9C655.0 132.4 656.4 132.6 657.6 131.9C658.0 134.3 657.9 136.7 658.7 139.1C659.4 141.5 661.1 143.9 662.3 146.3C663.3 144.3 664.4 143.6 665.4 140.1C666.3 136.7 667.2 129.9 668.0 125.7C668.7 121.4 669.2 118.2 669.8 114.5C671.8 117.2 673.7 119.3 675.7 122.6C677.7 125.8 680.4 130.7 681.9 133.9C683.4 137.2 683.6 139.4 684.5 142.2C686.1 138.8 687.6 134.4 689.3 131.9C691.0 129.3 693.1 127.7 694.5 126.7C695.9 125.7 696.7 126.2 697.8 126.0C696.9 127.9 695.7 129.5 695.3 131.9C694.9 134.2 695.1 137.4 695.5 140.1C695.9 142.9 696.9 145.6 697.6 148.4C698.3 145.3 699.0 141.8 699.6 139.1C700.3 136.3 700.9 134.3 701.5 131.9C703.3 134.3 705.2 136.5 706.9 139.1C708.5 141.7 710.0 144.6 711.5 147.4C712.5 144.6 713.8 142.7 714.6 139.1C715.5 135.5 716.8 129.6 716.7 125.7C716.5 121.7 714.6 118.8 713.6 115.3C715.5 118.1 717.5 120.0 719.3 123.6C721.1 127.2 723.0 132.0 724.4 137.0C725.8 142.0 726.6 148.0 727.7 153.6C730.1 151.8 732.0 149.6 734.8 148.4C737.5 147.2 741.1 146.4 744.1 146.3C747.0 146.2 749.8 147.0 752.3 147.9C754.9 148.7 757.0 150.3 759.3 151.5C756.3 151.7 753.0 151.5 750.3 152.0C747.5 152.5 744.9 153.5 743.0 154.6C741.1 155.7 740.3 157.3 738.9 158.7C739.9 158.0 740.1 157.1 742.0 156.7C743.9 156.2 747.4 155.9 750.3 156.1C753.1 156.4 756.1 157.5 759.0 158.2C756.8 159.2 754.1 160.3 752.3 161.3C750.5 162.3 748.2 163.8 748.2 164.4C748.2 165.0 749.9 165.7 752.3 164.9C754.7 164.1 758.5 162.0 762.7 159.8C766.8 157.5 772.3 154.2 777.1 151.5C776.3 154.6 775.7 157.3 774.5 160.8C773.3 164.2 770.8 170.1 769.9 172.2C769.0 174.2 769.9 172.0 769.2 173.3C768.5 174.5 766.8 177.4 765.6 179.5C768.5 179.6 771.0 179.8 774.4 180.0C777.7 180.2 782.7 180.8 785.8 180.5C788.9 180.2 791.3 178.8 793.0 177.9C794.6 177.1 794.7 176.2 795.6 175.3C795.2 177.4 795.5 179.5 794.5 181.5C793.6 183.6 792.0 185.9 789.9 187.7C787.7 189.5 784.5 191.0 781.6 192.4C778.7 193.8 775.2 194.5 772.3 196.0C769.4 197.5 766.8 199.4 764.1 201.2C766.8 201.3 769.6 201.1 772.3 201.7C775.1 202.3 777.7 204.6 780.6 204.8C783.5 204.9 786.6 203.4 789.7 202.7C786.6 204.9 783.8 207.1 780.6 209.4C777.3 211.8 773.3 214.1 770.3 216.7C767.2 219.2 765.1 222.2 762.5 224.9C764.4 226.0 766.4 226.5 768.2 228.0C770.0 229.6 771.5 232.3 773.4 234.2C775.2 236.1 777.6 238.6 779.6 239.5C781.5 240.3 783.1 239.3 784.9 239.3C782.1 240.7 779.6 242.0 776.5 243.6C773.3 245.2 768.8 246.9 766.1 248.8C763.5 250.7 760.8 253.1 760.4 255.0C760.1 256.9 761.7 258.8 764.1 260.1C766.4 261.4 770.8 262.2 774.4 262.7C778.0 263.3 781.8 263.2 785.5 263.4C783.2 265.1 781.1 267.0 778.5 268.4C776.0 269.8 772.8 271.2 770.3 272.0C767.8 272.8 765.8 272.7 763.5 273.0C767.8 274.0 772.3 275.5 776.5 275.8C780.6 276.1 784.6 275.1 788.6 274.8C786.6 276.8 784.3 278.8 782.7 280.8C781.0 282.8 779.9 284.9 778.5 287.0C777.0 289.9 775.5 292.9 774.0 295.8C775.7 297.1 777.4 298.9 779.2 299.5C781.0 300.0 783.0 299.1 784.9 298.9C781.9 300.2 778.6 302.1 776.1 302.6C773.6 303.0 772.0 301.9 769.9 301.5C768.2 302.9 765.5 303.8 764.7 305.7C763.9 307.6 765.1 310.8 765.2 312.9C765.4 315.0 765.6 316.3 765.8 318.1C764.0 317.0 762.1 316.3 760.6 315.0C759.0 313.6 757.8 311.5 756.5 309.8C754.7 310.1 752.8 309.8 751.3 310.8C749.7 311.9 748.5 314.3 747.2 316.0C746.1 315.3 745.3 314.5 744.1 313.9C742.9 313.3 741.3 312.9 739.9 312.4C731.6 316.6 725.0 320.9 715.0 325.0C705.0 329.1 691.7 336.5 680.0 337.0C668.3 337.5 654.7 332.0 645.0 328.0C635.3 324.0 629.7 317.9 622.0 312.9Z" fill="#80aeaa" stroke="#66928e" stroke-width="1.1"/>
<path d="M640.0 300.0C665.0 300.0 690.0 300.0 715.0 300.0C718.3 313.3 721.7 326.7 725.0 340.0C693.3 340.0 661.7 340.0 630.0 340.0C633.3 326.7 636.7 313.3 640.0 300.0Z" fill="#80aeaa"/>
<path d="M617.9 347.0C617.2 351.1 616.3 354.7 615.8 359.4C615.3 364.1 614.8 369.9 614.7 375.0C614.6 380.1 614.6 385.8 615.0 390.0C615.4 394.2 616.6 396.3 616.8 400.0C617.0 403.7 616.6 407.9 616.2 412.4C615.8 417.0 614.9 422.4 614.3 427.4C617.0 424.1 619.8 420.5 622.4 417.4C625.0 414.3 627.4 411.6 629.9 408.7C630.9 412.0 631.7 414.3 633.0 418.7C634.2 423.0 635.8 429.7 637.3 434.8C638.9 440.0 640.9 445.4 642.3 449.8C643.8 454.1 644.8 457.2 646.0 461.0C646.4 456.0 646.7 451.0 647.0 446.0C648.8 450.6 650.2 454.7 652.3 459.7C654.4 464.8 657.2 470.9 659.7 476.5C658.7 471.4 657.7 466.2 656.6 461.0C659.3 463.1 662.3 465.4 664.7 467.2C667.1 469.0 668.9 470.1 670.9 471.6C671.4 469.3 671.8 467.0 672.2 464.7C674.3 468.0 676.3 471.4 678.4 474.7C679.4 470.5 680.5 466.4 681.5 462.2C683.0 465.5 684.4 468.9 685.9 472.2C686.7 465.1 687.5 458.1 688.4 451.0C690.0 454.8 691.9 459.4 693.3 462.2C694.8 465.0 695.8 466.0 697.1 467.8C697.5 466.0 697.9 464.1 698.3 462.2C699.6 464.9 701.0 467.6 702.3 470.3C702.6 463.5 702.8 456.3 703.3 449.8C703.8 443.2 704.5 437.3 705.2 431.1C706.6 435.3 707.8 439.4 709.5 443.6C711.3 447.7 713.6 453.0 715.7 456.0C717.9 459.0 720.3 459.6 722.6 461.4C721.3 456.7 719.7 452.5 718.9 447.3C718.0 442.0 718.0 435.7 717.6 429.9C719.5 433.6 721.4 436.9 723.2 441.1C725.0 445.2 726.5 450.2 728.2 454.8C728.0 448.1 727.8 441.5 727.6 434.8C728.8 440.0 730.1 445.2 731.3 450.4C732.5 447.3 734.0 444.6 735.0 441.1C736.1 437.5 736.7 433.2 737.5 429.2C739.0 431.9 740.4 434.5 741.9 437.1C742.3 430.9 742.9 424.8 743.1 418.7C743.3 412.5 743.2 405.6 743.1 400.0C743.0 394.4 742.6 392.1 742.4 385.1C742.3 378.0 742.7 364.6 742.4 357.5C742.2 350.4 741.5 347.4 741.1 342.4C733.3 336.3 722.7 327.2 717.7 324.3C712.7 321.3 713.8 324.5 711.0 324.8C708.2 325.0 704.1 325.2 700.7 325.8C697.2 326.4 693.8 327.3 690.3 328.4C686.9 329.5 680.5 332.4 680.0 332.5C679.5 332.7 687.6 329.1 687.1 329.4C686.5 329.8 680.0 333.6 676.7 334.6C673.5 335.5 670.5 335.7 667.4 335.1C664.3 334.5 661.4 331.8 658.2 331.0C654.9 330.2 650.7 330.9 647.8 330.5C644.9 330.0 644.9 328.7 640.6 328.4C636.3 328.0 628.2 328.4 622.0 328.4C620.6 334.6 619.3 340.8 617.9 347.0Z" fill="#3f5367" stroke="#35485b" stroke-width="0.8"/>
<path d="M633.7 332.8C633.2 341.0 633.2 350.2 632.3 357.5C631.4 364.9 630.9 370.4 628.2 376.8C625.4 383.2 619.9 389.7 615.8 396.1" fill="none" stroke="#2e4051" stroke-width="0.9"/>
<path d="M647.5 330.0C647.5 339.2 647.2 349.7 647.5 357.5C647.7 365.3 650.2 370.4 648.8 376.8C647.5 383.2 642.4 391.0 639.2 396.1C636.0 401.1 632.8 403.4 629.6 407.1" fill="none" stroke="#2e4051" stroke-width="0.9"/>
<path d="M668.1 335.5C668.6 342.8 669.3 349.7 669.5 357.5C669.7 365.3 670.6 375.0 669.5 382.3C668.3 389.7 664.4 395.2 662.6 401.6C660.8 408.0 658.9 414.4 658.5 420.9C658.0 427.3 659.4 433.7 659.8 440.1" fill="none" stroke="#2e4051" stroke-width="0.9"/>
<path d="M676.4 341.0C676.4 347.4 675.0 353.9 676.4 360.3C677.7 366.7 682.3 373.1 684.6 379.6C686.9 386.0 689.9 391.9 690.1 398.8C690.4 405.7 687.1 414.7 686.0 420.9C684.9 427.1 684.2 431.0 683.2 436.0" fill="none" stroke="#2e4051" stroke-width="0.9"/>
<path d="M692.9 335.5C692.9 342.8 692.0 350.2 692.9 357.5C693.8 364.9 696.3 372.2 698.4 379.6C700.5 386.9 704.4 394.2 705.3 401.6C706.2 408.9 704.4 416.3 703.9 423.6" fill="none" stroke="#2e4051" stroke-width="0.9"/>
<path d="M708.0 332.8C708.5 341.0 708.5 350.2 709.4 357.5C710.3 364.9 711.7 370.8 713.5 376.8C715.4 382.8 717.7 387.8 720.4 393.3C723.2 398.8 726.8 404.3 730.1 409.8" fill="none" stroke="#2e4051" stroke-width="0.9"/>
<path d="M730.1 341.0C730.3 349.3 730.4 358.5 730.9 365.8C731.3 373.1 732.7 379.1 732.8 385.1C732.9 391.0 730.5 397.5 731.4 401.6C732.3 405.7 736.0 407.1 738.3 409.8" fill="none" stroke="#2e4051" stroke-width="0.9"/>
<path d="M670.9 379.6C672.7 386.0 674.5 393.3 676.4 398.8C678.2 404.3 680.0 408.0 681.9 412.6" fill="none" stroke="#2e4051" stroke-width="0.9"/>
<path d="M647.3 400.0C647.1 404.1 646.3 407.9 646.7 412.4C647.1 417.0 648.2 423.2 649.8 427.4C651.3 431.5 654.0 435.0 656.0 437.3C658.0 439.7 659.7 440.2 661.6 441.7" fill="none" stroke="#2e4051" stroke-width="0.9"/>
<path d="M662.2 400.0C661.0 404.1 659.3 407.9 658.5 412.4C657.7 417.0 656.8 422.6 657.2 427.4C657.7 432.2 659.7 436.5 661.0 441.1" fill="none" stroke="#2e4051" stroke-width="0.9"/>
<path d="M675.3 400.0C675.1 408.3 674.6 417.6 674.7 424.9C674.8 432.2 674.9 437.8 675.9 443.6C677.0 449.4 679.2 454.3 680.9 459.7" fill="none" stroke="#2e4051" stroke-width="0.9"/>
<path d="M682.1 403.7C682.6 408.7 682.8 414.1 683.4 418.7C684.0 423.2 686.0 428.0 685.9 431.1C685.8 434.2 683.8 435.3 682.8 437.3" fill="none" stroke="#2e4051" stroke-width="0.9"/>
<path d="M697.7 400.0C697.1 405.4 697.2 411.2 695.8 416.2C694.5 421.2 691.8 426.3 689.6 429.9C687.4 433.4 685.0 434.8 682.8 437.3" fill="none" stroke="#2e4051" stroke-width="0.9"/>
<path d="M702.1 400.0C702.7 404.1 703.5 407.7 703.9 412.4C704.3 417.2 704.3 423.2 704.5 428.6" fill="none" stroke="#2e4051" stroke-width="0.9"/>
<path d="M712.0 403.7C711.2 407.9 710.8 412.7 709.5 416.2C708.3 419.7 706.2 422.0 704.5 424.9" fill="none" stroke="#2e4051" stroke-width="0.9"/>
<path d="M712.6 412.4C713.7 416.6 713.8 420.1 715.7 424.9C717.7 429.7 722.4 436.3 724.5 441.1C726.5 445.8 726.9 449.4 728.2 453.5" fill="none" stroke="#2e4051" stroke-width="0.9"/>
<path d="M725.7 400.0C726.9 403.3 728.2 406.6 729.4 410.0" fill="none" stroke="#2e4051" stroke-width="0.9"/>
<path d="M731.9 407.5C733.6 413.3 735.9 421.2 736.9 424.9C737.9 428.6 737.7 428.2 738.1 429.9" fill="none" stroke="#2e4051" stroke-width="0.9"/>
<path d="M647.9 428.6C647.5 434.4 647.1 440.2 646.7 446.0" fill="none" stroke="#2e4051" stroke-width="0.9"/>
<path d="M653.5 437.3C653.9 442.3 653.7 448.1 654.8 452.3C655.8 456.4 657.0 459.1 659.7 462.2C662.4 465.3 667.2 468.0 670.9 470.9" fill="none" stroke="#2e4051" stroke-width="0.9"/>
<path d="M661.0 444.8C663.1 450.6 665.4 457.9 667.2 462.2C669.0 466.6 670.1 468.0 671.6 470.9" fill="none" stroke="#2e4051" stroke-width="0.9"/>
<path d="M675.9 444.8C675.5 449.0 675.3 453.9 674.7 457.2C674.1 460.6 673.0 462.2 672.2 464.7" fill="none" stroke="#2e4051" stroke-width="0.9"/>
<path d="M685.9 437.3C687.1 442.3 687.7 447.3 689.6 452.3C691.5 457.2 694.6 462.2 697.1 467.2" fill="none" stroke="#2e4051" stroke-width="0.9"/>
<path d="M692.7 428.6C693.3 435.7 693.4 444.2 694.6 449.8C695.7 455.4 697.9 458.1 699.6 462.2" fill="none" stroke="#2e4051" stroke-width="0.9"/>
<path d="M629.2 400.0C629.5 402.9 629.7 405.8 629.9 408.7" fill="none" stroke="#2e4051" stroke-width="0.9"/>
<path d="M623.0 312.9C621.3 316.0 619.6 318.8 617.9 322.2C616.1 325.6 614.4 329.8 612.7 333.6C611.0 337.3 609.6 341.7 607.5 344.9C605.5 348.1 602.7 350.1 600.3 352.7C603.4 351.5 606.0 350.7 609.6 349.1C613.2 347.4 618.2 345.3 622.0 342.9C625.8 340.4 629.2 337.7 632.3 334.6C635.4 331.5 638.3 327.5 640.6 324.3C642.8 321.0 644.4 318.1 645.8 315.0C647.1 311.9 647.8 308.8 648.9 305.7C640.2 308.1 631.6 310.5 623.0 312.9Z" fill="#3f5367" stroke="#2c3e4f" stroke-width="0.8"/>
<path d="M713.1 310.3C714.1 313.2 715.2 316.4 716.2 319.1C717.1 321.8 717.5 324.1 718.7 326.3C719.9 328.6 721.2 330.5 723.4 332.5C725.5 334.6 728.2 336.8 731.7 338.7C735.1 340.6 739.9 342.5 744.1 343.9C748.2 345.3 753.4 346.2 756.5 347.0C759.6 347.8 760.6 348.0 762.7 348.5C761.3 346.0 759.9 343.6 758.5 340.8C757.1 337.9 755.8 334.4 754.4 331.5C753.0 328.6 751.6 325.6 750.3 323.2C748.9 320.8 747.7 319.0 746.1 317.0C744.6 315.0 742.7 313.2 741.0 311.3C731.7 311.0 722.4 310.7 713.1 310.3Z" fill="#3f5367" stroke="#2c3e4f" stroke-width="0.8"/>
<path d="M584.8 273.0C585.5 275.3 585.3 277.6 586.9 279.8C588.4 281.9 591.3 284.4 594.1 286.0C596.8 287.5 600.1 288.5 603.4 289.1C606.7 289.7 610.3 289.8 613.7 289.6C617.2 289.3 620.6 288.5 624.1 287.5C627.5 286.5 631.3 284.7 634.4 283.4C637.5 282.1 639.9 280.7 642.7 279.8C645.4 278.9 648.2 278.3 650.9 278.0C653.7 277.7 656.4 277.8 659.2 278.2C661.9 278.6 665.0 279.6 667.4 280.3C669.9 281.0 671.6 281.7 673.6 282.3C676.4 281.5 678.8 280.4 681.9 279.8C685.0 279.1 689.2 278.5 692.2 278.2C695.3 277.9 697.0 278.0 700.0 278.2C703.0 278.4 706.9 278.3 710.3 279.2C713.8 280.2 716.7 282.4 720.7 283.9C724.6 285.4 729.8 287.1 734.1 288.0C738.4 289.0 742.5 289.6 746.5 289.6C750.5 289.6 754.2 289.0 757.9 288.0C761.5 287.1 765.3 285.6 768.2 283.9C771.1 282.2 773.6 279.4 775.4 277.7C777.2 276.0 777.8 274.9 779.0 273.6C778.6 277.4 778.3 281.9 777.6 285.0C777.0 288.1 776.3 289.6 775.1 292.2C773.8 294.8 772.0 298.2 769.9 300.5C767.8 302.8 765.6 304.5 762.7 306.2C759.7 307.8 756.1 309.3 752.3 310.3C748.5 311.3 744.2 312.1 739.9 312.4C735.6 312.6 731.0 312.4 726.5 311.9C722.0 311.3 717.4 310.5 713.1 309.3C708.8 308.1 704.5 306.6 700.7 304.6C696.9 302.6 693.8 300.0 690.3 297.4C686.9 294.8 682.8 291.5 680.0 289.1C677.2 286.7 675.8 285.0 673.6 282.9C672.6 284.0 672.3 284.3 670.5 286.0C668.8 287.8 666.2 290.5 663.3 293.3C660.4 296.0 656.4 300.0 653.0 302.6C649.5 305.1 646.1 307.3 642.7 308.8C639.2 310.2 636.5 310.8 632.3 311.3C628.2 311.9 622.5 312.4 617.9 311.9C613.2 311.3 608.2 310.0 604.4 308.2C600.6 306.5 597.7 304.0 595.1 301.5C592.5 299.0 590.5 296.0 588.9 293.3C587.4 290.5 586.5 288.4 585.8 285.0C585.1 281.6 585.1 277.0 584.8 273.0Z" fill="#3f5367" stroke="#2c3e4f" stroke-width="0.8"/>
<path d="M612.2 186.6C613.4 183.8 613.9 181.0 615.6 178.0C617.3 174.9 619.9 171.1 622.4 168.3C624.8 165.6 627.7 162.9 630.1 161.6C632.5 160.2 634.6 159.7 636.8 160.1C639.1 160.5 641.5 162.5 643.6 164.0C645.7 165.5 647.8 167.8 649.4 169.3C651.0 170.8 651.9 171.9 653.2 173.1" fill="none" stroke="#0d1414" stroke-width="0.9"/>
<path d="M612.2 186.6C620.8 181.0 629.3 175.4 637.8 169.8C638.9 169.6 640.0 169.4 641.2 169.3" fill="none" stroke="#0d1414" stroke-width="0.9"/>
<path d="M637.8 170.1C640.0 174.0 642.3 178.0 644.5 182.0" fill="none" stroke="#0d1414" stroke-width="0.9"/>
<path d="M661.9 173.6C660.9 172.7 660.0 171.3 659.0 170.7C658.0 170.1 657.0 169.9 656.1 170.1C655.2 170.2 654.3 170.9 653.7 171.7C653.1 172.5 653.1 173.4 652.7 174.6C652.3 175.8 652.2 177.6 651.3 178.9C650.4 180.3 648.9 181.8 647.4 182.6C646.0 183.4 643.8 182.9 642.6 183.6C641.4 184.2 640.4 185.6 640.2 186.6C640.0 187.6 640.8 188.6 641.6 189.5C642.5 190.5 644.2 191.5 645.5 192.4" fill="none" stroke="#0d1414" stroke-width="1.0"/>
<path d="M657.6 173.1C657.4 174.8 657.8 176.2 657.1 178.0C656.4 179.7 654.8 182.2 653.2 183.8C651.6 185.3 649.3 186.3 647.4 187.1C645.6 187.9 643.9 188.1 642.1 188.6" fill="none" stroke="#0d1414" stroke-width="1.2"/>
<path d="M735.0 169.3C732.5 167.7 730.2 165.8 727.5 164.5C724.8 163.1 721.4 161.3 718.8 161.1C716.2 160.9 714.3 162.1 712.0 163.5C709.8 164.9 707.1 167.6 705.3 169.3C703.5 171.0 702.7 172.2 701.4 173.6" fill="none" stroke="#0d1414" stroke-width="0.9"/>
<path d="M735.0 183.3C728.9 179.4 722.9 175.6 716.9 171.7C715.9 171.2 714.9 170.7 714.0 170.3" fill="none" stroke="#0d1414" stroke-width="0.9"/>
<path d="M742.9 187.8C742.3 185.8 742.0 184.1 741.3 182.0C740.6 179.9 739.7 177.3 738.6 175.2C737.6 173.1 736.2 171.2 735.0 169.2" fill="none" stroke="#0d1414" stroke-width="0.9"/>
<path d="M742.9 187.8C740.2 186.3 737.6 184.8 735.0 183.3" fill="none" stroke="#0d1414" stroke-width="0.9"/>
<path d="M716.9 171.8C714.6 175.8 712.4 179.8 710.1 183.8" fill="none" stroke="#0d1414" stroke-width="0.9"/>
<path d="M692.8 175.3C693.7 174.2 694.6 172.7 695.6 172.0C696.7 171.3 698.1 171.0 699.0 171.2C700.0 171.4 701.0 172.1 701.4 173.1C701.9 174.2 701.0 176.0 701.6 177.5C702.3 178.9 703.7 180.8 705.3 181.8C706.9 182.9 709.5 182.9 711.1 183.8C712.6 184.6 714.0 185.5 714.5 186.6C714.9 187.8 714.3 189.3 713.5 190.5C712.7 191.7 710.9 192.6 709.6 193.6" fill="none" stroke="#0d1414" stroke-width="1.0"/>
<path d="M697.1 173.6C697.4 175.4 697.2 177.1 698.1 178.9C698.9 180.8 700.7 183.1 702.4 184.7C704.1 186.3 706.3 187.8 708.2 188.6C710.0 189.4 711.7 189.2 713.5 189.5" fill="none" stroke="#0d1414" stroke-width="1.2"/>
<path d="M626.2 198.2C628.8 198.2 631.0 197.9 633.9 198.0C636.8 198.2 640.4 198.7 643.6 199.2C646.8 199.7 650.3 200.2 653.2 201.1C656.1 202.0 659.1 203.0 660.9 204.5C662.8 205.9 663.8 208.2 664.3 209.8C664.8 211.4 664.0 212.7 663.8 214.1C660.3 213.8 656.6 213.5 653.2 213.2C649.8 212.8 646.8 212.9 643.6 212.2C640.4 211.5 636.5 210.2 633.9 208.8C631.4 207.5 629.4 205.8 628.1 204.0C626.9 202.2 626.9 200.1 626.2 198.2Z" fill="none" stroke="#0d1414" stroke-width="0.9"/>
<path d="M725.1 197.3C722.0 197.3 719.0 197.1 715.9 197.3C712.8 197.4 709.5 197.6 706.3 198.2C703.0 198.9 699.5 200.0 696.6 201.1C693.7 202.2 690.7 203.5 688.9 205.0C687.1 206.4 686.4 208.3 686.0 209.8C685.6 211.2 686.3 212.4 686.5 213.6C689.9 213.5 693.3 213.5 696.6 213.2C699.9 212.8 703.0 212.4 706.3 211.7C709.5 211.1 713.2 210.6 715.9 209.3C718.6 208.0 721.1 206.0 722.6 204.0C724.2 202.0 724.3 199.5 725.1 197.3Z" fill="none" stroke="#0d1414" stroke-width="0.9"/>
<path d="M637.2 211.2C636.8 214.5 636.1 217.8 636.2 221.0C636.2 224.2 636.8 227.5 637.7 230.3C638.6 233.0 640.0 235.5 641.3 237.5C642.6 239.6 644.3 241.5 645.5 242.7C646.7 243.9 647.5 243.9 648.6 244.6" fill="none" stroke="#0d1414" stroke-width="0.9"/>
<path d="M663.2 213.8C663.7 216.9 664.3 220.1 664.6 223.1C664.8 226.0 664.8 228.6 664.9 231.3" fill="none" stroke="#0d1414" stroke-width="0.9"/>
<path d="M686.8 213.2C686.5 216.5 686.1 219.9 686.0 223.1C685.8 226.2 686.0 229.3 686.0 232.4" fill="none" stroke="#0d1414" stroke-width="0.9"/>
<path d="M713.6 210.7C714.0 214.1 714.8 217.6 714.7 221.0C714.6 224.4 713.7 228.6 713.1 231.3C712.5 234.1 711.8 235.9 711.1 237.5C710.4 239.2 709.7 239.9 709.0 241.1" fill="none" stroke="#0d1414" stroke-width="0.9"/>
<path d="M648.0 240.6C649.9 239.9 651.8 239.2 653.7 238.6C655.6 236.1 657.5 233.7 659.4 231.3C660.3 231.7 661.1 232.0 662.0 232.4C663.4 231.7 664.7 231.0 666.1 230.3C668.2 229.6 670.3 228.9 672.3 228.2C673.7 228.1 675.1 227.9 676.5 227.7C677.1 228.7 677.8 229.8 678.5 230.8C680.9 231.2 683.3 231.5 685.8 231.8C687.5 231.5 689.2 231.2 690.9 230.8C691.6 231.7 692.3 232.5 693.0 233.4C695.1 233.0 697.1 232.7 699.2 232.4C700.6 233.7 701.9 235.1 703.3 236.5C704.7 237.0 706.1 237.5 707.4 238.0C708.1 239.1 708.8 240.1 709.5 241.1" fill="none" stroke="#6c9a96" stroke-width="1.1"/>
<circle cx="651.4" cy="225.2" r="3.1" fill="#000"/>
<circle cx="700.5" cy="225.3" r="3.1" fill="#000"/>
<ellipse cx="672.8" cy="246.5" rx="1.4" ry="3.6" fill="#000"/>
<ellipse cx="682.4" cy="246.5" rx="1.4" ry="3.6" fill="#000"/>
<path d="M656.1 310.8C655.8 309.0 656.6 307.9 657.6 307.2C658.7 306.5 660.6 306.3 662.3 306.5C663.9 306.7 665.6 307.7 667.4 308.2C669.3 308.8 671.4 310.0 673.6 310.0C675.9 310.0 678.6 309.1 680.9 308.2C683.1 307.4 685.1 305.5 687.1 304.6C689.1 303.8 691.0 302.9 692.8 303.1C694.5 303.3 696.5 304.5 697.4 305.7C698.4 306.8 699.0 307.9 698.4 309.8C697.9 311.7 696.4 314.8 694.3 317.0C692.2 319.3 689.0 321.7 686.0 323.2C683.1 324.8 679.8 326.2 676.7 326.3C673.6 326.5 670.4 325.6 667.4 324.3C664.5 322.9 661.1 320.3 659.2 318.1C657.3 315.8 656.3 312.6 656.1 310.8Z" fill="none" stroke="#0d1414" stroke-width="0.8"/>
<rect x="660.8" y="307.4" width="8" height="8" rx="2.5" fill="none" stroke="#0d1414" stroke-width="0.7"/>
<rect x="682.4" y="305.4" width="7" height="8" rx="1" transform="rotate(-18 686 309)" fill="none" stroke="#0d1414" stroke-width="0.7"/>
<path d="M622.0 151.5C623.7 153.9 625.4 156.3 627.2 158.7" fill="none" stroke="#6a9894" stroke-width="1.15"/>
<path d="M668.0 156.1C669.5 150.6 671.1 145.1 672.6 139.6C673.3 142.2 674.0 144.8 674.7 147.4C675.9 149.4 677.1 151.5 678.3 153.6C679.7 154.4 681.1 155.3 682.4 156.1C684.2 153.7 685.9 151.3 687.6 148.9C688.3 152.9 689.0 156.8 689.7 160.8" fill="none" stroke="#6a9894" stroke-width="1.15"/>
<path d="M680.0 155.6C681.4 154.9 682.8 154.2 684.1 153.6C685.3 152.2 686.5 150.8 687.7 149.4C688.6 153.4 689.5 157.3 690.3 161.3" fill="none" stroke="#6a9894" stroke-width="1.15"/>
<path d="M702.7 162.9C703.9 160.6 705.1 158.4 706.3 156.1C708.6 156.8 710.8 157.5 713.1 158.2C714.6 155.6 716.2 153.0 717.7 150.5C718.2 152.5 718.7 154.6 719.3 156.7" fill="none" stroke="#6a9894" stroke-width="1.15"/>
<path d="M737.9 161.8C738.4 160.4 738.9 159.1 739.4 157.7C740.3 157.3 741.1 157.0 742.0 156.7" fill="none" stroke="#6a9894" stroke-width="1.15"/>
<path d="M746.0 184.1C747.9 183.6 749.8 183.1 751.7 182.6C751.0 185.3 750.3 188.1 749.6 190.8C750.6 192.6 751.7 194.3 752.7 196.0C751.8 198.8 751.0 201.5 750.1 204.3C750.3 206.0 750.5 207.7 750.6 209.4C750.1 210.5 749.6 211.5 749.1 212.5C749.8 213.0 750.5 213.6 751.1 214.1" fill="none" stroke="#6a9894" stroke-width="1.15"/>
<path d="M758.4 184.6C760.6 183.3 762.9 181.9 765.1 180.5" fill="none" stroke="#6a9894" stroke-width="1.15"/>
<path d="M757.3 206.3C759.6 204.8 761.8 203.2 764.1 201.7" fill="none" stroke="#6a9894" stroke-width="1.15"/>
<path d="M750.6 227.0C752.0 229.4 753.4 231.8 754.8 234.2C756.5 235.9 758.2 237.7 759.9 239.4" fill="none" stroke="#6a9894" stroke-width="1.15"/>
<path d="M750.6 227.1C752.3 229.8 754.1 232.6 755.8 235.3C757.9 236.4 759.9 237.4 762.0 238.4C759.2 240.0 756.5 241.5 753.7 243.1C752.3 245.0 751.0 246.9 749.6 248.8C750.3 250.8 751.0 252.9 751.7 255.0C754.8 257.2 757.9 259.4 761.0 261.7C758.9 263.6 756.8 265.5 754.8 267.4C755.1 269.4 755.4 271.5 755.8 273.6C753.9 275.3 752.0 277.0 750.1 278.7" fill="none" stroke="#6a9894" stroke-width="1.15"/>
<path d="M726.3 244.6C727.2 248.1 728.1 251.5 728.9 255.0C730.1 255.3 731.3 255.7 732.5 256.0C731.0 256.7 729.4 257.4 727.9 258.1C729.8 259.3 731.7 260.5 733.6 261.7C731.2 263.2 728.8 264.8 726.3 266.3" fill="none" stroke="#6a9894" stroke-width="1.15"/>
<path d="M713.4 256.0C713.6 259.4 713.8 262.9 713.9 266.3C713.8 269.1 713.6 271.8 713.4 274.6" fill="none" stroke="#6a9894" stroke-width="1.15"/>
<path d="M607.5 184.1C605.5 184.8 603.4 185.5 601.3 186.2C601.5 188.1 601.7 190.0 601.8 191.9C599.8 194.3 597.7 196.7 595.6 199.1C597.9 198.8 600.1 198.4 602.4 198.1C602.7 199.3 603.0 200.5 603.4 201.7C599.6 203.2 595.8 204.8 592.0 206.3C594.1 205.8 596.2 205.3 598.2 204.8C599.4 206.0 600.6 207.2 601.8 208.4" fill="none" stroke="#6a9894" stroke-width="1.15"/>
<path d="M666.2 196.3C668.3 193.1 670.4 189.9 672.5 186.6C673.8 189.5 675.1 192.4 676.4 195.3C678.3 192.8 680.2 190.2 682.1 187.6C682.8 191.1 683.4 194.7 684.1 198.2" fill="none" stroke="#6a9894" stroke-width="1.15"/>
<path d="M603.4 224.9C601.7 227.7 599.9 230.4 598.2 233.2C596.2 234.9 594.1 236.6 592.0 238.4C593.4 238.9 594.8 239.4 596.2 239.9" fill="none" stroke="#6a9894" stroke-width="1.15"/>
<path d="M603.4 227.1C601.7 229.5 599.9 231.9 598.2 234.3C596.2 235.5 594.1 236.7 592.0 237.9C595.8 238.8 599.6 239.6 603.4 240.5C602.5 242.7 601.7 245.0 600.8 247.2C602.4 247.2 603.9 247.2 605.5 247.2C603.4 250.8 601.3 254.4 599.3 258.1C601.3 258.9 603.4 259.8 605.5 260.6C608.2 259.8 611.0 258.9 613.7 258.1" fill="none" stroke="#6a9894" stroke-width="1.15"/>
<path d="M627.2 246.2C626.8 248.1 626.5 250.0 626.1 251.9C625.1 252.7 624.1 253.6 623.0 254.4C625.4 253.6 627.8 252.7 630.3 251.9C631.6 252.9 633.0 253.9 634.4 255.0C633.7 256.3 633.0 257.7 632.3 259.1C631.6 258.1 630.9 257.0 630.3 256.0C629.6 257.0 628.9 258.1 628.2 259.1C629.2 260.8 630.3 262.5 631.3 264.3C632.5 264.4 633.7 264.6 634.9 264.8" fill="none" stroke="#6a9894" stroke-width="1.15"/>
<path d="M645.8 256.0C644.9 259.4 644.0 262.9 643.2 266.3C644.0 269.1 644.9 271.8 645.8 274.6" fill="none" stroke="#6a9894" stroke-width="1.15"/>
<path d="M617.3 273.6C615.4 276.7 613.6 279.8 611.7 282.9C608.9 283.5 606.1 284.2 603.4 284.9C607.5 284.8 611.7 284.6 615.8 284.4C616.1 285.6 616.5 286.8 616.8 288.0" fill="none" stroke="#6a9894" stroke-width="1.15"/>
<path d="M672.6 328.9C674.3 329.4 676.1 329.9 677.8 330.5C679.5 329.9 681.2 329.4 682.9 328.9" fill="none" stroke="#6a9894" stroke-width="1.15"/>
<path d="M553.7 367.2C553.0 370.0 553.6 372.2 551.7 375.5C549.8 378.8 545.5 383.1 542.4 386.9" fill="none" stroke="#b3b9b7" stroke-width="0.9"/>
<path d="M559.4 367.2C559.2 371.0 559.8 375.0 558.9 378.6C557.9 382.2 555.8 386.0 553.7 388.9C551.7 391.9 548.9 393.8 546.5 396.2" fill="none" stroke="#b3b9b7" stroke-width="0.9"/>
<path d="M568.2 379.1C568.4 381.4 569.2 383.7 568.7 385.8C568.2 388.0 566.3 390.0 565.1 392.0" fill="none" stroke="#b3b9b7" stroke-width="0.9"/>
<path d="M582.7 384.3C584.7 384.1 587.6 383.0 588.9 383.8C590.1 384.5 589.5 387.2 589.9 388.9" fill="none" stroke="#b3b9b7" stroke-width="0.9"/>
<path d="M596.1 382.2C596.4 383.4 597.0 384.8 597.1 385.8C597.2 386.9 596.8 387.6 596.6 388.4" fill="none" stroke="#b3b9b7" stroke-width="0.9"/>
<path d="M605.4 379.6C605.0 380.3 605.0 381.1 604.3 381.7C603.7 382.3 602.3 382.7 601.3 383.2" fill="none" stroke="#b3b9b7" stroke-width="0.9"/>
<path d="M792.9 324.6C793.7 326.7 794.8 329.3 795.4 330.8C796.1 332.4 796.5 332.9 797.0 333.9" fill="none" stroke="#b3b9b7" stroke-width="0.9"/>
<path d="M800.1 330.3C801.1 331.2 802.3 332.2 803.2 332.9C804.0 333.6 804.6 333.9 805.3 334.4" fill="none" stroke="#b3b9b7" stroke-width="0.9"/>
<path d="M780.5 342.7C780.6 343.6 780.7 344.6 781.0 345.3C781.2 346.0 781.7 346.3 782.0 346.8" fill="none" stroke="#b3b9b7" stroke-width="0.9"/>
<path d="M786.7 342.7C788.0 343.9 789.4 345.4 790.8 346.3C792.2 347.3 793.5 347.7 794.9 348.4" fill="none" stroke="#b3b9b7" stroke-width="0.9"/>
<path d="M770.1 350.5C770.5 351.5 770.7 352.7 771.2 353.6C771.6 354.4 772.2 354.9 772.7 355.6" fill="none" stroke="#b3b9b7" stroke-width="0.9"/>
<path d="M791.3 354.6C792.5 355.1 794.0 355.8 794.9 356.1C795.9 356.5 796.3 356.5 797.0 356.7" fill="none" stroke="#b3b9b7" stroke-width="0.9"/>
<path d="M756.2 350.5C756.0 352.5 755.7 354.9 755.7 356.7C755.7 358.4 756.0 359.4 756.2 360.8" fill="none" stroke="#b3b9b7" stroke-width="0.9"/>
<path d="M782.5 363.4C783.2 364.2 784.1 365.2 784.6 366.0C785.1 366.7 785.3 367.3 785.6 368.0" fill="none" stroke="#b3b9b7" stroke-width="0.9"/>
<path d="M757.2 366.0C757.6 367.7 757.8 369.7 758.2 371.1C758.7 372.5 759.3 373.2 759.8 374.2" fill="none" stroke="#b3b9b7" stroke-width="0.9"/>
<path d="M761.3 367.0C761.9 368.7 762.1 370.7 762.9 372.2C763.7 373.6 765.0 374.6 766.0 375.8" fill="none" stroke="#b3b9b7" stroke-width="0.9"/>
<path d="M766.0 368.0C766.7 369.7 767.1 371.9 768.1 373.2C769.0 374.5 770.5 374.9 771.7 375.8" fill="none" stroke="#b3b9b7" stroke-width="0.9"/>
<path d="M772.2 368.0C773.1 369.4 773.7 371.2 774.8 372.2C775.8 373.1 777.2 373.2 778.4 373.7" fill="none" stroke="#b3b9b7" stroke-width="0.9"/>
<path d="M749.5 369.1C749.8 370.1 749.9 371.0 750.5 372.2C751.1 373.3 752.2 374.6 753.1 375.8" fill="none" stroke="#b3b9b7" stroke-width="0.9"/>
</svg>
<div id="menubar" class="abs"></div>
<div id="ctrlbar" class="abs"></div>
<div id="tabrow" class="abs"></div>
<div id="tab" class="abs"></div>
<div id="tools" class="abs"></div>
<div id="toolshead" class="abs"></div>
<div class="abs" style="left:72px;top:66px;width:1px;height:660px;background:#3c3c3c"></div>
<div id="status" class="abs"></div>
<div id="hscroll" class="abs"></div>
<div id="vscroll" class="abs"></div>
<div class="abs thumb" style="left:918px;top:712px;width:15px;height:15px"></div>
<div class="abs thumb" style="left:1310px;top:394px;width:15px;height:15px"></div>
<div id="dock" class="abs"></div>
<div id="dockhead" class="abs"></div>
<div class="abs" style="left:1326px;top:76px;width:1px;height:650px;background:#3c3c3c"></div>

<!-- menubar widgets -->
<div class="abs sep" style="left:533px;top:5px;height:20px"></div>
<div class="abs sep" style="left:978px;top:5px;height:20px"></div>
<div class="abs sep" style="left:1123px;top:5px;height:20px"></div>
<div class="abs" id="search" style="left:1134px;top:5px;width:117px;height:19px;background:#a6a6a6;border:1px solid #2b2b2b"></div>
<div class="abs" id="winbtns" style="left:1260px;top:-1px;width:103px;height:20px;background:linear-gradient(#3a3a3a,#303030);border:1px solid #222;border-radius:0 0 4px 4px"></div>
<div class="abs" style="left:1288px;top:0;width:1px;height:18px;background:#2a2a2a"></div>
<div class="abs" style="left:1315px;top:0;width:1px;height:18px;background:#2a2a2a"></div>

<!-- control bar widgets -->
<div class="abs sep" style="left:137px;top:35px;height:25px"></div>
<div class="abs lite" style="left:144px;top:38px;width:19px;height:19px;background:#fff"></div>
<div class="abs btn" style="left:162px;top:38px;width:16px;height:19px"></div>
<div class="abs" style="left:185px;top:38px;width:19px;height:19px;background:#2f74bf;border:1px solid #2b2b2b;box-shadow:inset 0 0 0 1px #fff"></div>
<div class="abs btn" style="left:203px;top:38px;width:16px;height:19px"></div>
<div class="abs btn" style="left:265px;top:38px;width:18px;height:10px"></div>
<div class="abs btn" style="left:265px;top:47px;width:18px;height:10px"></div>
<div class="abs inp" style="left:282px;top:38px;width:48px;height:19px"></div>
<div class="abs btn" style="left:329px;top:38px;width:16px;height:19px"></div>
<div class="abs lite" style="left:352px;top:38px;width:92px;height:19px"></div>
<div class="abs btn" style="left:443px;top:38px;width:16px;height:19px"></div>
<div class="abs lite" style="left:466px;top:38px;width:89px;height:19px"></div>
<div class="abs btn" style="left:554px;top:38px;width:16px;height:19px"></div>
<div class="abs inp" style="left:629px;top:38px;width:53px;height:19px"></div>
<div class="abs btn" style="left:681px;top:38px;width:16px;height:19px"></div>
<div class="abs lite" style="left:736px;top:38px;width:19px;height:19px"></div>
<div class="abs btn" style="left:754px;top:38px;width:16px;height:19px"></div>
<div class="abs sep" style="left:777px;top:35px;height:25px"></div>
<div class="abs btn" style="left:784px;top:39px;width:101px;height:17px"></div>
<div class="abs btn" style="left:892px;top:39px;width:72px;height:17px"></div>
<div class="abs" style="left:232px;top:54px;width:27px;height:0;border-top:1px dotted #e8912d"></div>
<div class="abs" style="left:578px;top:53px;width:45px;height:0;border-top:1px dotted #e8912d"></div>

<!-- status bar widgets -->
<div class="abs inp" style="left:108px;top:712px;width:53px;height:15px"></div>
<div class="abs btn" style="left:160px;top:712px;width:16px;height:15px"></div>
<div class="abs inp" style="left:218px;top:712px;width:43px;height:15px"></div>
<div class="abs btn" style="left:260px;top:712px;width:16px;height:15px"></div>
<div class="abs sep" style="left:317px;top:712px;height:14px"></div>
<div class="abs sep" style="left:517px;top:712px;height:14px"></div>

<!-- color panel -->
<div id="colorpanel" class="abs" style="left:1095px;top:74px;width:231px;height:94px;background:#474747;border:1px solid #2a2a2a;border-top:4px solid #1d1d1d"></div>
<div class="abs" style="left:1096px;top:78px;width:230px;height:17px;background:#3b3b3b;border-bottom:1px solid #2e2e2e"></div>
<div class="abs" style="left:1096px;top:78px;width:46px;height:17px;background:#474747;border-right:1px solid #2e2e2e"></div>
<div class="abs" style="left:1201px;top:78px;width:1px;height:16px;background:#2e2e2e"></div>
<div class="abs" style="left:1261px;top:78px;width:1px;height:16px;background:#2e2e2e"></div>
<div class="abs" style="left:1101px;top:104px;width:40px;height:14px;background:#fff;border:1px solid #2a2a2a"></div>
<svg width="1366" height="726" viewBox="0 0 1366 726"><rect x="1114.5" y="105" width="13.1" height="12" fill="#000"/><path d="M1102.4 116.8 L1114 105.2" stroke="#f00000" stroke-width="2"/></svg>
<div class="abs" style="left:1102px;top:128px;width:207px;height:25px;border:1px solid #2a2a2a;background:linear-gradient(to bottom,rgba(255,255,255,1) 0%,rgba(255,255,255,0) 50%,rgba(0,0,0,0) 50%,rgba(0,0,0,1) 100%),linear-gradient(to right,#e8141c 0%,#f7e611 16%,#58a82c 33%,#12a19a 45%,#1aa7e0 54%,#1d4fa2 66%,#6a3493 80%,#e4107e 92%,#e8141c 100%)"></div>
<div class="abs" style="left:1096px;top:159px;width:230px;height:8px;background:#474747;border-top:1px solid #2e2e2e;box-shadow:inset 0 1px 0 #555"></div>

<svg id="icons" width="1366" height="726" viewBox="0 0 1366 726">
<defs><filter id="ish" x="0" y="0" width="1366" height="726" filterUnits="userSpaceOnUse"><feDropShadow dx="0" dy="-1" stdDeviation="0" flood-color="#1c1c1c" flood-opacity="0.85"/></filter></defs>
<rect x="6" y="140.8" width="60" height="1" fill="#363636"/><rect x="6" y="141.8" width="60" height="1" fill="#525252"/>
<rect x="6" y="238.8" width="60" height="1" fill="#363636"/><rect x="6" y="239.8" width="60" height="1" fill="#525252"/>
<rect x="6" y="313.2" width="60" height="1" fill="#363636"/><rect x="6" y="314.2" width="60" height="1" fill="#525252"/>
<rect x="6" y="363.2" width="60" height="1" fill="#363636"/><rect x="6" y="364.2" width="60" height="1" fill="#525252"/>
<rect x="6" y="389.3" width="60" height="1" fill="#363636"/><rect x="6" y="390.3" width="60" height="1" fill="#525252"/>
<rect x="6" y="438.8" width="60" height="1" fill="#363636"/><rect x="6" y="439.8" width="60" height="1" fill="#525252"/>
<rect x="26" y="80" width="1" height="4" fill="#141414"/>
<rect x="28" y="80" width="1" height="4" fill="#141414"/>
<rect x="30" y="80" width="1" height="4" fill="#141414"/>
<rect x="32" y="80" width="1" height="4" fill="#141414"/>
<rect x="34" y="80" width="1" height="4" fill="#141414"/>
<rect x="36" y="80" width="1" height="4" fill="#141414"/>
<rect x="38" y="80" width="1" height="4" fill="#141414"/>
<rect x="40" y="80" width="1" height="4" fill="#141414"/>
<rect x="42" y="80" width="1" height="4" fill="#141414"/>
<rect x="44" y="80" width="1" height="4" fill="#141414"/>
<rect x="37" y="416" width="28" height="22" fill="#303030"/><rect x="38.5" y="417" width="25" height="18" fill="#353535"/>
<rect x="7" y="505" width="59" height="18" fill="#464646" stroke="#2c2c2c" stroke-width="1"/><rect x="7.5" y="505.5" width="19" height="17" fill="#2d2d2d"/>
<rect x="7" y="530" width="59" height="16" fill="#525252" stroke="#2c2c2c" stroke-width="1"/><rect x="7.5" y="530.5" width="19" height="15" fill="#2f2f2f"/><rect x="46.5" y="530.5" width="0.8" height="15" fill="#3a3a3a"/><rect x="26.5" y="530.5" width="0.8" height="15" fill="#3a3a3a"/>
<rect x="5" y="38" width="3" height="1" fill="#1c1c1c"/>
<rect x="5" y="40" width="3" height="1" fill="#1c1c1c"/>
<rect x="5" y="42" width="3" height="1" fill="#1c1c1c"/>
<rect x="5" y="44" width="3" height="1" fill="#1c1c1c"/>
<rect x="5" y="46" width="3" height="1" fill="#1c1c1c"/>
<rect x="5" y="48" width="3" height="1" fill="#1c1c1c"/>
<rect x="5" y="50" width="3" height="1" fill="#1c1c1c"/>
<rect x="5" y="52" width="3" height="1" fill="#1c1c1c"/>
<rect x="5" y="54" width="3" height="1" fill="#1c1c1c"/>
<rect x="5" y="56" width="3" height="1" fill="#1c1c1c"/>
<path d="M146.8 54.4 L160.6 40.6" stroke="#f00000" stroke-width="1.9"/>
<rect x="191.9" y="45" width="5" height="5.2" fill="#1a1a1a" stroke="#fff" stroke-width="1.5"/>
<rect x="1201" y="161" width="1" height="4" fill="#111"/>
<rect x="1203" y="161" width="1" height="4" fill="#111"/>
<rect x="1205" y="161" width="1" height="4" fill="#111"/>
<rect x="1207" y="161" width="1" height="4" fill="#111"/>
<rect x="1209" y="161" width="1" height="4" fill="#111"/>
<rect x="1211" y="161" width="1" height="4" fill="#111"/>
<rect x="1213" y="161" width="1" height="4" fill="#111"/>
<rect x="1215" y="161" width="1" height="4" fill="#111"/>
<rect x="1217" y="161" width="1" height="4" fill="#111"/>
<rect x="1219" y="161" width="1" height="4" fill="#111"/>
<rect x="1337" y="80" width="1" height="4" fill="#121212"/>
<rect x="1339" y="80" width="1" height="4" fill="#121212"/>
<rect x="1341" y="80" width="1" height="4" fill="#121212"/>
<rect x="1343" y="80" width="1" height="4" fill="#121212"/>
<rect x="1345" y="80" width="1" height="4" fill="#121212"/>
<rect x="1347" y="80" width="1" height="4" fill="#121212"/>
<rect x="1349" y="80" width="1" height="4" fill="#121212"/>
<rect x="1351" y="80" width="1" height="4" fill="#121212"/>
<rect x="1353" y="80" width="1" height="4" fill="#121212"/>
<rect x="1355" y="80" width="1" height="4" fill="#121212"/>
<rect x="1337" y="177" width="1" height="4" fill="#121212"/>
<rect x="1339" y="177" width="1" height="4" fill="#121212"/>
<rect x="1341" y="177" width="1" height="4" fill="#121212"/>
<rect x="1343" y="177" width="1" height="4" fill="#121212"/>
<rect x="1345" y="177" width="1" height="4" fill="#121212"/>
<rect x="1347" y="177" width="1" height="4" fill="#121212"/>
<rect x="1349" y="177" width="1" height="4" fill="#121212"/>
<rect x="1351" y="177" width="1" height="4" fill="#121212"/>
<rect x="1353" y="177" width="1" height="4" fill="#121212"/>
<rect x="1355" y="177" width="1" height="4" fill="#121212"/>
<rect x="1337" y="274" width="1" height="4" fill="#121212"/>
<rect x="1339" y="274" width="1" height="4" fill="#121212"/>
<rect x="1341" y="274" width="1" height="4" fill="#121212"/>
<rect x="1343" y="274" width="1" height="4" fill="#121212"/>
<rect x="1345" y="274" width="1" height="4" fill="#121212"/>
<rect x="1347" y="274" width="1" height="4" fill="#121212"/>
<rect x="1349" y="274" width="1" height="4" fill="#121212"/>
<rect x="1351" y="274" width="1" height="4" fill="#121212"/>
<rect x="1353" y="274" width="1" height="4" fill="#121212"/>
<rect x="1355" y="274" width="1" height="4" fill="#121212"/>
<rect x="1337" y="371" width="1" height="4" fill="#121212"/>
<rect x="1339" y="371" width="1" height="4" fill="#121212"/>
<rect x="1341" y="371" width="1" height="4" fill="#121212"/>
<rect x="1343" y="371" width="1" height="4" fill="#121212"/>
<rect x="1345" y="371" width="1" height="4" fill="#121212"/>
<rect x="1347" y="371" width="1" height="4" fill="#121212"/>
<rect x="1349" y="371" width="1" height="4" fill="#121212"/>
<rect x="1351" y="371" width="1" height="4" fill="#121212"/>
<rect x="1353" y="371" width="1" height="4" fill="#121212"/>
<rect x="1355" y="371" width="1" height="4" fill="#121212"/>
<rect x="1337" y="440" width="1" height="4" fill="#121212"/>
<rect x="1339" y="440" width="1" height="4" fill="#121212"/>
<rect x="1341" y="440" width="1" height="4" fill="#121212"/>
<rect x="1343" y="440" width="1" height="4" fill="#121212"/>
<rect x="1345" y="440" width="1" height="4" fill="#121212"/>
<rect x="1347" y="440" width="1" height="4" fill="#121212"/>
<rect x="1349" y="440" width="1" height="4" fill="#121212"/>
<rect x="1351" y="440" width="1" height="4" fill="#121212"/>
<rect x="1353" y="440" width="1" height="4" fill="#121212"/>
<rect x="1355" y="440" width="1" height="4" fill="#121212"/>
<rect x="1328" y="172.5" width="38" height="1" fill="#2a2a2a"/><rect x="1328" y="173.5" width="38" height="1" fill="#555"/>
<rect x="1328" y="270.0" width="38" height="1" fill="#2a2a2a"/><rect x="1328" y="271.0" width="38" height="1" fill="#555"/>
<rect x="1328" y="366.8" width="38" height="1" fill="#2a2a2a"/><rect x="1328" y="367.8" width="38" height="1" fill="#555"/>
<rect x="1328" y="435.8" width="38" height="1" fill="#2a2a2a"/><rect x="1328" y="436.8" width="38" height="1" fill="#555"/>
<rect x="1328" y="504.5" width="38" height="1" fill="#2a2a2a"/><rect x="1328" y="505.5" width="38" height="1" fill="#555"/>
<g filter="url(#ish)">
<path d="M16.20 96.10L16.20 111.92L19.29 108.83L21.99 113.46L24.69 112.31L23.15 107.29L27.01 106.52Z" fill="#2a2a2a" stroke="#c6c6c6" stroke-width="1.1" stroke-linejoin="miter"/>
<path d="M47.07 96.87L47.07 109.99L50.15 107.29L52.85 112.69L54.40 111.53L52.08 106.52L55.94 105.75Z" fill="#c6c6c6" stroke="#3a3a3a" stroke-width="0.4"/>
<path d="M60.6 115L64 115L64 111.6Z" fill="#e4e4e4"/>
<path d="M25.10 126.20L20.90 127.19L23.17 130.87L19.49 128.60L18.50 132.80L17.51 128.60L13.83 130.87L16.10 127.19L11.90 126.20L16.10 125.21L13.83 121.53L17.51 123.80L18.50 119.60L19.49 123.80L23.17 121.53L20.90 125.21Z" fill="#c6c6c6"/>
<path d="M21.99 130.05L28.16 136.61" fill="none" stroke="#c6c6c6" stroke-width="1.6" stroke-linecap="round"/>
<ellipse cx="51.3" cy="126.6" rx="7.8" ry="4.6" fill="none" stroke="#c6c6c6" stroke-width="1.1"/>
<path d="M44.37 130.82L47.07 132.37L45.91 135.07L47.07 136.23" fill="none" stroke="#c6c6c6" stroke-width="1"/>
<path d="M51.31 124.27L60.19 132.37L51.31 137.38Z" fill="#c6c6c6" stroke="#3a3a3a" stroke-width="0.4"/>
<path d="M13.50 162.68L15.82 155.12L21.22 149.72L26.62 154.96L20.83 160.52Z" fill="#b4b4b4" stroke="#d4d4d4" stroke-width="0.6"/>
<path d="M23.53 146.01L30.40 151.88L28.24 154.35L21.45 148.48Z" fill="#bdbdbd" stroke="#474747" stroke-width="0.7"/>
<path d="M25.08 147.79L23.15 150.10" fill="none" stroke="#8a8a8a" stroke-width="0.5"/>
<path d="M27.01 149.48L25.08 151.80" fill="none" stroke="#8a8a8a" stroke-width="0.5"/>
<path d="M28.70 151.10L26.85 153.42" fill="none" stroke="#8a8a8a" stroke-width="0.5"/>
<path d="M14.04 162.22L19.44 156.35" fill="none" stroke="#3c3c3c" stroke-width="0.7"/>
<circle cx="20.1" cy="155.7" r="1.1" fill="#2a2a2a"/>
<path d="M30.6 165L34 165L34 161.6Z" fill="#e4e4e4"/>
<path d="M44.50 162.68L46.82 155.12L52.22 149.72L57.62 154.96L51.83 160.52Z" fill="#b4b4b4" stroke="#d4d4d4" stroke-width="0.6"/>
<path d="M54.53 146.01L61.40 151.88L59.24 154.35L52.45 148.48Z" fill="#bdbdbd" stroke="#474747" stroke-width="0.7"/>
<path d="M56.08 147.79L54.15 150.10" fill="none" stroke="#8a8a8a" stroke-width="0.5"/>
<path d="M58.01 149.48L56.08 151.80" fill="none" stroke="#8a8a8a" stroke-width="0.5"/>
<path d="M59.70 151.10L57.85 153.42" fill="none" stroke="#8a8a8a" stroke-width="0.5"/>
<path d="M45.04 162.22L50.44 156.35" fill="none" stroke="#3c3c3c" stroke-width="0.7"/>
<circle cx="51.1" cy="155.7" r="1.1" fill="#2a2a2a"/>
<path d="M42 149.3 C44.5 148.3 44.8 150.5 43.6 153.5 C42 157.5 40.3 161 42 162.3 C43 163 44 162.6 45 162" fill="none" stroke="#c6c6c6" stroke-width="1"/>
<text x="20.9" y="185.8" text-anchor="middle" font-family="Liberation Serif,serif" font-size="20" fill="#c9c9c9">T</text>
<path d="M30.6 189L34 189L34 185.6Z" fill="#e4e4e4"/>
<path d="M43.98 185.98L57.10 172.09" fill="none" stroke="#c6c6c6" stroke-width="1.2"/>
<path d="M60.6 189L64 189L64 185.6Z" fill="#e4e4e4"/>
<defs><linearGradient id="gv" x1="0" y1="0" x2="0" y2="1"><stop offset="0" stop-color="#858585"/><stop offset="1" stop-color="#5c5c5c"/></linearGradient><linearGradient id="gh" x1="0" y1="0" x2="1" y2="0"><stop offset="0" stop-color="#3e3e3e"/><stop offset="1" stop-color="#c8c8c8"/></linearGradient><linearGradient id="gh2" x1="0" y1="0" x2="1" y2="0"><stop offset="0" stop-color="#f4f4f4"/><stop offset="1" stop-color="#111"/></linearGradient></defs>
<ellipse cx="21" cy="203" rx="7.9" ry="5.9" fill="url(#gv)" stroke="#c6c6c6" stroke-width="1"/>
<path d="M30.6 213L34 213L34 209.6Z" fill="#e4e4e4"/>
<path d="M59.57 195.56L50.93 204.66" fill="none" stroke="#c6c6c6" stroke-width="1.8" stroke-linecap="round"/>
<path d="M42.05 208.36L46.30 206.20L48.23 204.27L50.54 205.43L50.93 207.75L48.61 209.68L44.75 209.68Z" fill="#c6c6c6"/>
<path d="M60.6 213L64 213L64 209.6Z" fill="#e4e4e4"/>
<circle cx="17.1" cy="226.3" r="6" fill="url(#gv)" stroke="#c6c6c6" stroke-width="1"/>
<path d="M29.71 220.86L32.02 223.18L20.83 234.37L17.75 234.75L18.13 232.05Z" fill="#b9b9b9" stroke="#474747" stroke-width="0.6"/>
<path d="M30.6 237L34 237L34 233.6Z" fill="#e4e4e4"/>
<path d="M46.30 226.27L52.47 220.09L59.80 220.09L53.24 226.27Z" fill="#b5b5b5" stroke="#2a2a2a" stroke-width="0.5"/>
<path d="M44.37 227.04L51.70 227.04L51.31 232.82L43.60 232.82Z" fill="#a9a9a9" stroke="#d0d0d0" stroke-width="0.5"/>
<path d="M53.24 226.65L59.80 220.48L59.80 224.72L52.85 232.05Z" fill="#8a8a8a" stroke="#c0c0c0" stroke-width="0.5"/>
<path d="M60.6 237L64 237L64 233.6Z" fill="#e4e4e4"/>
<path d="M17.6 246.6 A6.6 6.6 0 0 1 27.6 254.8" fill="none" stroke="#c6c6c6" stroke-width="1.3"/>
<path d="M27.6 254.8 A6.6 6.6 0 1 1 14.4 252" fill="none" stroke="#c6c6c6" stroke-width="1.5" stroke-dasharray="2 1.6"/>
<path d="M14.66 249.26L18.13 245.40L19.29 248.87Z" fill="#c6c6c6"/>
<path d="M30.6 263L34 263L34 259.6Z" fill="#e4e4e4"/>
<rect x="46.3" y="246.5" width="12.4" height="10" fill="#585858" stroke="#c6c6c6" stroke-width="0.9"/>
<rect x="42.3" y="252.3" width="8.4" height="7.2" fill="rgba(90,90,90,0.6)" stroke="#c6c6c6" stroke-width="0.9"/>
<path d="M52.08 252.73L56.33 248.49" fill="none" stroke="#e0e0e0" stroke-width="0.9"/>
<path d="M54.01 248.33L56.71 248.10L56.48 250.80" fill="none" stroke="#e0e0e0" stroke-width="0.9"/>
<path d="M60.6 263L64 263L64 259.6Z" fill="#e4e4e4"/>
<path d="M14 272.5 C15.5 269.5 18 271 17.8 275 C17.5 279 19 281.5 22.5 280.5 C26 279.5 26.5 275.5 28.8 275.2 C30.5 275.2 30.3 277.5 30 279.5" fill="none" stroke="#c6c6c6" stroke-width="2.2"/>
<path d="M13.50 282.44L23.53 272.41" fill="none" stroke="#e8e8e8" stroke-width="0.9"/>
<circle cx="18" cy="278" r="1.9" fill="#474747" stroke="#f0f0f0" stroke-width="1.1"/><circle cx="13.5" cy="282.5" r="1.1" fill="#474747" stroke="#e8e8e8" stroke-width="0.8"/><circle cx="23.6" cy="272.3" r="1.1" fill="#474747" stroke="#e8e8e8" stroke-width="0.8"/>
<path d="M30.6 287L34 287L34 283.6Z" fill="#e4e4e4"/>
<rect x="47.8" y="271.6" width="10.6" height="10.6" fill="none" stroke="#c6c6c6" stroke-width="1" stroke-dasharray="1.5 1.2"/>
<rect x="46.9" y="270.7" width="1.8" height="1.8" fill="#e0e0e0"/>
<rect x="52.2" y="270.7" width="1.8" height="1.8" fill="#e0e0e0"/>
<rect x="57.5" y="270.7" width="1.8" height="1.8" fill="#e0e0e0"/>
<rect x="57.5" y="276.0" width="1.8" height="1.8" fill="#e0e0e0"/>
<rect x="57.5" y="281.3" width="1.8" height="1.8" fill="#e0e0e0"/>
<rect x="52.2" y="281.3" width="1.8" height="1.8" fill="#e0e0e0"/>
<rect x="46.9" y="281.3" width="1.8" height="1.8" fill="#e0e0e0"/>
<path d="M42.98 269.71L42.98 280.90L50.93 277.04Z" fill="#c6c6c6" stroke="#3a3a3a" stroke-width="0.4"/>
<circle cx="22" cy="300" r="5.8" fill="#5a5a5a" stroke="#8a8a8a" stroke-width="0.9"/><circle cx="16.6" cy="299.6" r="4.3" fill="#6a6a6a" stroke="#c6c6c6" stroke-width="0.9"/>
<path d="M14 299.6 H23.5" stroke="#f0f0f0" stroke-width="1.1" stroke-dasharray="1 0.9" fill="none"/>
<path d="M24.07 298.80L24.07 309.22L26.62 306.90L30.86 305.90Z" fill="#c6c6c6" stroke="#3a3a3a" stroke-width="0.4"/>
<path d="M30.6 311L34 311L34 307.6Z" fill="#e4e4e4"/>
<path d="M42.98 293.40L54.01 296.10L54.01 302.66L58.26 303.82L58.26 305.36L59.80 308.45L42.98 308.45Z" fill="#a8a8a8"/>
<path d="M46.84 294.17L46.84 308.45" fill="none" stroke="#3d3d3d" stroke-width="0.8"/>
<path d="M50.15 295.10L50.15 307.29" fill="none" stroke="#3d3d3d" stroke-width="0.8"/>
<path d="M42.98 299.96L54.01 300.35" fill="none" stroke="#3d3d3d" stroke-width="0.8"/>
<path d="M47.84 304.98L58.64 305.13" fill="none" stroke="#3d3d3d" stroke-width="0.8"/>
<path d="M47.84 306.90L59.41 306.90" fill="none" stroke="#3d3d3d" stroke-width="0.8"/>
<path d="M60.6 311L64 311L64 307.6Z" fill="#e4e4e4"/>
<rect x="13.3" y="321.4" width="15.4" height="11.2" fill="#3a3a3a" stroke="#c6c6c6" stroke-width="0.9"/>
<path d="M13.5 328 C18 326 20 323.5 22 321 M13.5 332 C18 330 20 327 23 325.5 C25 324.5 27 323 28.5 321.5 M17 321 C19.5 324 22 328 23.5 332.5 M24.5 321 C25.5 325 25.5 329 24.5 332.5 M24 327.3 H28.6" fill="none" stroke="#c6c6c6" stroke-width="0.8"/>
<rect x="43.3" y="321.4" width="15.6" height="11.2" fill="url(#gh)" stroke="#c6c6c6" stroke-width="0.9"/>
<path d="M14.27 357.22L22.38 349.12" fill="none" stroke="#c6c6c6" stroke-width="2.6" stroke-linecap="round"/>
<path d="M15.43 356.22L21.99 349.73" fill="none" stroke="#474747" stroke-width="0.9" stroke-dasharray="1.2 1"/>
<path d="M20.45 347.57L23.53 345.26L27.01 348.73L24.69 351.82Z" fill="#c6c6c6"/>
<path d="M24.69 346.80L27.39 344.10" fill="none" stroke="#c6c6c6" stroke-width="3" stroke-linecap="round"/>
<path d="M30.6 361L34 361L34 357.6Z" fill="#e4e4e4"/>
<rect x="42.2" y="343.2" width="8.6" height="8.6" fill="#a0a0a0"/><rect x="46.3" y="345.6" width="8.8" height="9" rx="2" fill="#6e6e6e" stroke="#b0b0b0" stroke-width="0.8"/><circle cx="55.5" cy="353.5" r="4.2" fill="#555" stroke="#c6c6c6" stroke-width="0.9"/>
<rect x="19.2" y="373.3" width="9.4" height="11.2" fill="#4d4d4d" stroke="#c6c6c6" stroke-width="0.9"/><rect x="22" y="369.4" width="3.8" height="2.8" fill="#c6c6c6"/><circle cx="23.9" cy="379" r="2.4" fill="none" stroke="#c6c6c6" stroke-width="1.3"/>
<rect x="12.0" y="369.2" width="1" height="1" fill="#dcdcdc"/>
<rect x="14.0" y="369.2" width="1" height="1" fill="#dcdcdc"/>
<rect x="16.0" y="369.2" width="1" height="1" fill="#dcdcdc"/>
<rect x="18.0" y="369.2" width="1" height="1" fill="#dcdcdc"/>
<rect x="13.0" y="370.9" width="1" height="1" fill="#dcdcdc"/>
<rect x="15.0" y="370.9" width="1" height="1" fill="#dcdcdc"/>
<rect x="17.0" y="370.9" width="1" height="1" fill="#dcdcdc"/>
<rect x="12.0" y="372.5" width="1" height="1" fill="#dcdcdc"/>
<rect x="14.0" y="372.5" width="1" height="1" fill="#dcdcdc"/>
<rect x="16.0" y="372.5" width="1" height="1" fill="#dcdcdc"/>
<rect x="14.0" y="374.1" width="1" height="1" fill="#dcdcdc"/>
<path d="M30.6 387L34 387L34 383.6Z" fill="#e4e4e4"/>
<path d="M43.4 369.4 V383.2 H59" fill="none" stroke="#c6c6c6" stroke-width="0.9"/><rect x="46.3" y="376.8" width="2.6" height="6" fill="#d0d0d0" stroke="#c6c6c6" stroke-width="0.5"/><rect x="51.2" y="372" width="2.6" height="10.8" fill="#888" stroke="#999" stroke-width="0.5"/><rect x="56" y="374" width="2.6" height="8.8" fill="#c8c8c8" stroke="#c6c6c6" stroke-width="0.5"/>
<path d="M60.6 387L64 387L64 383.6Z" fill="#e4e4e4"/>
<rect x="15.2" y="398.2" width="11.6" height="9.4" fill="url(#gv)" stroke="#c6c6c6" stroke-width="0.9"/>
<path d="M11 398.3 H14 M28 398.3 H31 M11 407.5 H14 M28 407.5 H31 M15.5 394 V397 M26.5 394 V397 M15.5 409 V412 M26.5 409 V412" stroke="#e0e0e0" stroke-width="1" fill="none"/>
<path d="M42.98 409.92L49.38 403.36L52.85 402.20L53.24 404.90L50.54 407.60Z" fill="#c6c6c6"/>
<path d="M52.08 400.66L55.17 397.19L60.96 397.19L55.56 402.59Z" fill="#9a9a9a"/>
<path d="M60.6 413L64 413L64 409.6Z" fill="#e4e4e4"/>
<path d="M18.6 435 L16 430.5 L12.5 427 C12.3 425.8 13.8 425.6 14.8 426.5 L17.6 429.2 L16.6 422 C16.5 420.8 18.4 420.6 18.7 421.8 L19.8 426.5 L20 420.2 C20 419 22 419 22.1 420.2 L22.5 426.3 L23.8 421 C24 420 25.8 420.2 25.7 421.4 L25.2 427.2 L27 424 C27.6 423 29.2 423.5 28.8 424.8 L26.2 431.5 L26 435 Z" fill="#bdbdbd"/>
<path d="M30.6 437L34 437L34 433.6Z" fill="#e4e4e4"/>
<circle cx="49.5" cy="424.4" r="5.2" fill="#6a6a6a" stroke="#b4b4b4" stroke-width="1.1"/>
<path d="M54.01 428.82L58.26 433.07" fill="none" stroke="#b4b4b4" stroke-width="2.4" stroke-linecap="round"/>
<rect x="6" y="443.5" width="35.5" height="35.5" fill="#fff" stroke="#2a2a2a" stroke-width="1"/><path d="M6.8 478 L40.6 444.4" stroke="#f00000" stroke-width="1.8"/>
<rect x="24.3" y="461.5" width="35.5" height="35.5" fill="#2f73be" stroke="#fff" stroke-width="1"/><rect x="23.6" y="460.8" width="36.9" height="36.9" fill="none" stroke="#333" stroke-width="0.6"/><rect x="33.3" y="470.5" width="17.5" height="17.5" fill="#474747" stroke="#fff" stroke-width="1"/>
<g transform="translate(0.8 -1.6)"><path d="M51 448.5 H54.5 Q56.8 448.5 56.8 451 V453.5" fill="none" stroke="#c6c6c6" stroke-width="1"/><path d="M49.6 448.5 L52.4 446 V451Z" fill="#c6c6c6"/><path d="M56.8 455.6 L54.3 452.6 H59.3Z" fill="#c6c6c6"/></g>
<rect x="10.6" y="489.6" width="6.6" height="6.6" fill="#2b2b2b" stroke="#d0d0d0" stroke-width="0.9"/><rect x="6.8" y="486" width="6.8" height="6.8" fill="#e8e8e8" stroke="#2b2b2b" stroke-width="0.8"/>
<rect x="11.8" y="508.6" width="10.6" height="10.6" fill="#2a2a2a" stroke="#3c8ad8" stroke-width="1.6"/>
<rect x="30.7" y="507.8" width="12" height="12" fill="url(#gh2)" stroke="#111" stroke-width="1"/>
<rect x="49.6" y="507.8" width="12" height="12" fill="#fff" stroke="#111" stroke-width="1"/><path d="M50.5 519 L60.8 508.8" stroke="#f00000" stroke-width="2.2"/>
<circle cx="16" cy="537.3" r="3.6" fill="#585858" stroke="#bdbdbd" stroke-width="0.9"/><rect x="16.6" y="537.6" width="5.8" height="5" fill="#c2c2c2"/>
<rect x="34.5" y="536.5" width="7.4" height="6.4" fill="#8c8c8c" stroke="#b0b0b0" stroke-width="0.6"/><circle cx="35.8" cy="537" r="3.8" fill="#626262" stroke="#c0c0c0" stroke-width="0.9"/>
<circle cx="55" cy="537.3" r="3.4" fill="#5a5a5a" stroke="#777" stroke-width="0.9"/><rect x="55.3" y="537.5" width="4.8" height="4.6" fill="#6c6c6c"/>
<rect x="23.9" y="559.6" width="14.6" height="11.6" fill="#5d5d5d" stroke="#b8b8b8" stroke-width="0.9"/><rect x="30.1" y="555.2" width="14.6" height="11.6" fill="#636363" stroke="#c8c8c8" stroke-width="0.9"/><rect x="30.6" y="555.7" width="13.6" height="2.4" fill="#888"/>
<path d="M4.6 71 L7.6 68.2 V73.8Z M8.8 71 L11.8 68.2 V73.8Z" fill="#c8c8c8"/>
<rect x="550.5" y="7.5" width="15.5" height="14.5" fill="#444" stroke="#6b6b6b" stroke-width="1"/>
<rect x="586.5" y="7.5" width="15.5" height="14.5" fill="#1d1d1d" stroke="#d4d4d4" stroke-width="1"/>
<rect x="625.5" y="7" width="17.5" height="13.5" fill="#474747" stroke="#d8d8d8" stroke-width="1"/><rect x="627.3" y="8.8" width="6.2" height="10" fill="#c4c4c4"/><rect x="635.2" y="8.8" width="6" height="4.2" fill="#c4c4c4"/><rect x="635.2" y="14.6" width="6" height="4.2" fill="#c4c4c4"/>
<path d="M645.3 12.2 H652.3 L648.8 17Z" fill="#d8d8d8"/>
<path d="M668 16 C671 11.5 676 8 684.5 6.5 C685.5 11 683 17 676.5 23.5 L675.6 19.5 L672.5 17.5 Z" fill="#8a8a8a"/><path d="M668.5 16.2 L672.2 12 L675.5 11.2 L672.8 16.5Z" fill="#777"/>
<circle cx="684.2" cy="19.2" r="4.1" fill="#474747" stroke="#d0d0d0" stroke-width="1.5"/><rect x="683" y="13" width="2.4" height="6.4" fill="#474747"/><rect x="683.5" y="14" width="1.5" height="5.4" fill="#d8d8d8"/>
<path d="M1105 13.6 H1110.2 L1107.6 16.6Z" fill="#d0d0d0"/>
<circle cx="1144.3" cy="12.3" r="3.7" fill="none" stroke="#2a2a2a" stroke-width="1.1"/><path d="M1141.6 15 L1137.6 18.8" stroke="#2a2a2a" stroke-width="1.3"/>
<rect x="1269" y="10.8" width="10" height="3.2" fill="#f0f0f0"/>
<rect x="1300" y="5.6" width="7.4" height="6" fill="none" stroke="#f0f0f0" stroke-width="1.6"/><rect x="1296.8" y="9" width="7.4" height="5.6" fill="#3a3a3a" stroke="#f0f0f0" stroke-width="1.6"/>
<path d="M1335 5.3 L1343.6 12.8 M1343.6 5.3 L1335 12.8" stroke="#f4f4f4" stroke-width="2.4" fill="none"/>
<path d="M166.89999999999998 46.2 H173.5 L170.2 50.2Z" fill="#d6d6d6"/>
<path d="M207.89999999999998 46.2 H214.5 L211.2 50.2Z" fill="#d6d6d6"/>
<path d="M333.9 46.2 H340.5 L337.2 50.2Z" fill="#d6d6d6"/>
<path d="M447.9 46.2 H454.5 L451.2 50.2Z" fill="#d6d6d6"/>
<path d="M558.9000000000001 46.2 H565.5 L562.2 50.2Z" fill="#d6d6d6"/>
<path d="M758.9000000000001 46.2 H765.5 L762.2 50.2Z" fill="#d6d6d6"/>
<path d="M270.6 45.8 H277.4 L274 42Z M270.6 50 H277.4 L274 53.8Z" fill="#d6d6d6"/>
<path d="M372.4 47.6 C374 43.6 380.5 42.2 385 43.8 C389 45.2 391 47 393.6 47 C396.5 47 399 43.4 405.5 42 C413 40.6 421.5 43.6 424 47.6 C421.5 51.8 413 54.6 405.5 53.4 C399 52.2 396.5 48.6 393.6 48.6 C391 48.6 389 50.6 385 51.8 C380.5 53.2 374 51.6 372.4 47.6Z" fill="#000"/>
<rect x="474.6" y="46.6" width="1.6" height="1.4" fill="#111"/>
<path d="M686.2 43.8 V52.4 L691.6 48.1Z" fill="#d0d0d0"/>
<rect x="976" y="43.6" width="6" height="6" fill="#8a8a8a" stroke="#d0d0d0" stroke-width="0.8" stroke-dasharray="1.4 0.8"/><rect x="983.6" y="40.6" width="6" height="6" fill="#8a8a8a" stroke="#d0d0d0" stroke-width="0.8" stroke-dasharray="1.4 0.8"/><path d="M982.6 43.6 V53.4 L985.2 51 L990 50.4Z" fill="#d6d6d6" stroke="#333" stroke-width="0.4"/>
<path d="M998 45 H1005.4 L1001.7 50.2Z" fill="#dcdcdc"/>
<path d="M1335.2 45.0 H1339.8 L1337.5 47.8Z" fill="#dcdcdc"/>
<rect x="1340.8" y="43.4" width="1.6" height="1.4" fill="#dcdcdc"/><rect x="1343.4" y="43.4" width="5.6" height="1.4" fill="#dcdcdc"/>
<rect x="1340.8" y="46.4" width="1.6" height="1.4" fill="#dcdcdc"/><rect x="1343.4" y="46.4" width="5.6" height="1.4" fill="#dcdcdc"/>
<rect x="1340.8" y="49.4" width="1.6" height="1.4" fill="#dcdcdc"/><rect x="1343.4" y="49.4" width="5.6" height="1.4" fill="#dcdcdc"/>
<path d="M299.3 71.5 L304.8 76.8 M304.8 71.5 L299.3 76.8" stroke="#e2e2e2" stroke-width="1.7" fill="none"/>
<path d="M88.6 715.6 H84.5 V723.4 H93 V721.6" fill="none" stroke="#d0d0d0" stroke-width="1.2"/><path d="M87 721.5 C87.6 718 89.6 716.6 92.2 716.6 V714.2 L97.2 718 L92.2 721.8 V719.4 C90 719.2 88.4 719.8 87 721.5Z" fill="#dadada"/>
<path d="M164.89999999999998 719.6 H171.5 L168.2 723.6Z" fill="#d6d6d6"/>
<path d="M264.9 719.6 H271.5 L268.2 723.6Z" fill="#d6d6d6"/>
<rect x="185" y="716.4" width="1.4" height="7.2" fill="#7e7e7e"/><path d="M192.6 716.4 V723.6 L187.2 720Z" fill="#7e7e7e"/><path d="M208 716.4 V723.6 L202.6 720Z" fill="#7e7e7e"/>
<path d="M286 716.4 V723.6 L291.4 720Z" fill="#7e7e7e"/><path d="M301.2 716.4 V723.6 L306.6 720Z" fill="#7e7e7e"/><rect x="307.4" y="716.4" width="1.4" height="7.2" fill="#7e7e7e"/>
<path d="M525 716 V723.6 L530.6 719.8Z" fill="#c4c4c4"/>
<path d="M548.4 715.4 V724.4 L541.6 719.9Z" fill="#e4e4e4"/>
<path d="M1297 714.8 V724.8 L1303.8 719.8Z" fill="#e4e4e4"/>
<path d="M1312.4 698.8 H1322.6 L1317.5 705.6Z" fill="#e4e4e4"/>
<path d="M1100.8 85.6 L1103.3 82.6 L1105.8 85.6 M1100.8 87.6 L1103.3 90.6 L1105.8 87.6" fill="none" stroke="#e0e0e0" stroke-width="1.1"/>
<path d="M1285.9 82 V90.4 L1290.3 86.2Z M1290.9 82 V90.4 L1295.3 86.2Z" fill="#dcdcdc"/>
<rect x="1301" y="81" width="1" height="11" fill="#5c5c5c"/><rect x="1302" y="81" width="1" height="11" fill="#2a2a2a"/><rect x="1303" y="81" width="1" height="11" fill="#5c5c5c"/>
<path d="M1307.9 84.2 H1312.7 L1310.3 87.9Z" fill="#dcdcdc"/>
<rect x="1313.7" y="82.1" width="8.3" height="1.2" fill="#e0e0e0"/>
<rect x="1313.7" y="84.5" width="8.3" height="1.2" fill="#e0e0e0"/>
<rect x="1313.7" y="86.9" width="8.3" height="1.2" fill="#e0e0e0"/>
<rect x="1313.7" y="89.3" width="8.3" height="1.2" fill="#e0e0e0"/>
<rect x="1322.6" y="147.4" width="1" height="1" fill="#2a2a2a"/>
<rect x="1322.6" y="149.4" width="1" height="1" fill="#2a2a2a"/>
<rect x="1320.6" y="149.4" width="1" height="1" fill="#2a2a2a"/>
<rect x="1322.6" y="151.4" width="1" height="1" fill="#2a2a2a"/>
<rect x="1320.6" y="151.4" width="1" height="1" fill="#2a2a2a"/>
<rect x="1318.6" y="151.4" width="1" height="1" fill="#2a2a2a"/>
<rect x="1322.6" y="153.4" width="1" height="1" fill="#2a2a2a"/>
<rect x="1320.6" y="153.4" width="1" height="1" fill="#2a2a2a"/>
<rect x="1318.6" y="153.4" width="1" height="1" fill="#2a2a2a"/>
<rect x="1316.6" y="153.4" width="1" height="1" fill="#2a2a2a"/>
<rect x="1322.6" y="155.4" width="1" height="1" fill="#2a2a2a"/>
<rect x="1320.6" y="155.4" width="1" height="1" fill="#2a2a2a"/>
<rect x="1318.6" y="155.4" width="1" height="1" fill="#2a2a2a"/>
<rect x="1316.6" y="155.4" width="1" height="1" fill="#2a2a2a"/>
<rect x="1314.6" y="155.4" width="1" height="1" fill="#2a2a2a"/>
<path d="M1353.6 70.6 L1356.6 67.8 V73.4Z M1357.8 70.6 L1360.8 67.8 V73.4Z" fill="#c8c8c8"/>
<rect x="1332.5" y="88.5" width="28" height="23.5" rx="3" fill="#333" stroke="#2a2a2a" stroke-width="1"/>
<path d="M1337.7 100.6C1337.5 99.5 1338.1 99.0 1338.5 98.6C1339.0 98.1 1339.5 97.9 1340.6 97.7C1341.7 97.6 1344.4 98.2 1345.3 97.7C1346.2 97.2 1345.2 95.6 1345.8 94.8C1346.4 94.0 1347.7 93.3 1348.9 93.1C1350.1 92.8 1351.7 92.8 1353.0 93.4C1354.3 94.0 1355.7 95.3 1356.4 96.5C1357.2 97.7 1357.6 99.3 1357.6 100.6C1357.6 102.0 1357.6 103.3 1356.6 104.4C1355.6 105.6 1353.6 107.1 1351.6 107.7C1349.7 108.2 1346.7 108.1 1344.7 107.7C1342.7 107.2 1340.7 106.3 1339.6 105.1C1338.4 103.9 1337.9 101.7 1337.7 100.6Z" fill="#d2d2d2"/>
<circle cx="1342.0" cy="101.3" r="1.52" fill="#3a3a3a"/>
<circle cx="1346.5" cy="103.5" r="1.31" fill="#3a3a3a"/>
<circle cx="1350.9" cy="103.4" r="1.31" fill="#3a3a3a"/>
<circle cx="1354.4" cy="100.3" r="1.31" fill="#3a3a3a"/>
<circle cx="1352.0" cy="97.1" r="1.10" fill="#3a3a3a"/>
<path d="M1339.4 136.6 V120 C1348 121 1354.6 127.6 1356 136.6Z" fill="#c4c4c4" stroke="#cfcfcf" stroke-width="0.9"/><path d="M1339.4 136.6 L1345.4 121.6 C1348.5 122.8 1351.2 124.8 1353 127.4Z" fill="#a2a2a2"/><path d="M1339.4 136.6 L1350 124 C1352.6 126.4 1354.4 129.4 1355.4 132.6Z" fill="#7c7c7c"/><path d="M1339.4 136.6 L1354.4 129.6 C1355.2 131.8 1355.8 134 1356 136.6Z" fill="#3e3e3e"/><path d="M1339.4 136.6 V120 M1339.4 136.6 H1356" stroke="#cfcfcf" stroke-width="0.9" fill="none"/>
<circle cx="1345.2" cy="156.5" r="5.6" fill="none" stroke="#cfcfcf" stroke-width="1.5"/><path d="M1345.2 156.5 L1353.4 148.6 M1345.2 156.5 L1353.4 164.4" stroke="#cfcfcf" stroke-width="1.5"/><circle cx="1345.2" cy="156.5" r="2.5" fill="#cfcfcf"/><circle cx="1353.5" cy="148.4" r="2.7" fill="#cfcfcf"/><circle cx="1353.5" cy="164.6" r="2.7" fill="#cfcfcf"/>
<rect x="1339.5" y="192.2" width="15.4" height="10.6" fill="#c2c2c2"/>
<rect x="1340.5" y="193.2" width="3.8" height="3.8" fill="#222"/>
<rect x="1345.4" y="193.2" width="3.8" height="3.8" fill="#454545"/>
<rect x="1350.3" y="193.2" width="3.8" height="3.8" fill="#888"/>
<rect x="1340.5" y="198.0" width="3.8" height="3.8" fill="#7a7a7a"/>
<rect x="1345.4" y="198.0" width="3.8" height="3.8" fill="#666"/>
<rect x="1350.3" y="198.0" width="3.8" height="3.8" fill="#383838"/>
<rect x="1344" y="227.2" width="8" height="7.6" fill="#b4b4b4"/><path d="M1345.6 226.6 L1340.6 220.6 L1342 218.2 L1344.6 220.4 L1347 226.4 Z M1346.6 226.4 L1346.4 216.4 Q1347.5 215.4 1348.6 216.4 L1348.6 226.4Z M1349.4 226.6 L1350.4 221 Q1352.6 218.6 1355.6 219.6 L1356 222.6 L1351.4 227Z" fill="#cfcfcf"/>
<circle cx="1347.2" cy="249.6" r="3.8" fill="#cfcfcf"/><circle cx="1342.9" cy="254.6" r="3.9" fill="#cfcfcf"/><circle cx="1351.5" cy="254.6" r="3.9" fill="#cfcfcf"/><path d="M1347.2 253.4 L1349 260 H1345.4Z" fill="#cfcfcf"/><rect x="1342.6" y="260" width="9.2" height="1.1" fill="#cfcfcf"/>
<rect x="1339" y="288" width="17" height="1.2" fill="#cfcfcf"/><rect x="1339" y="292" width="17" height="2.4" fill="#cfcfcf"/><rect x="1339" y="297" width="17" height="3.4" fill="#cfcfcf"/>
<rect x="1339.5" y="316.4" width="16.2" height="11.2" fill="url(#gh)" stroke="#cfcfcf" stroke-width="0.9"/>
<circle cx="1344.3" cy="348.6" r="6" fill="#b8b8b8"/><circle cx="1349.3" cy="353.5" r="5.5" fill="rgba(110,110,110,0.6)" stroke="#cfcfcf" stroke-width="1.1"/>
<circle cx="1347.5" cy="391.2" r="7.8" fill="none" stroke="#e2e2e2" stroke-width="1.3" stroke-dasharray="2.2 1.3"/><circle cx="1347.5" cy="391.2" r="5.5" fill="#b4b4b4"/>
<rect x="1342.8" y="412.6" width="12.6" height="13" fill="none" stroke="#cfcfcf" stroke-width="1.1"/><rect x="1339.4" y="419.6" width="4.8" height="4.8" fill="#474747" stroke="#cfcfcf" stroke-width="0.9"/><rect x="1341.8" y="421.8" width="5.8" height="5.8" fill="#777" stroke="#cfcfcf" stroke-width="0.9"/>
<path d="M1338.8 462.3 L1341.6 460.6 L1347.5 464.2 L1353.4 460.6 L1356.2 462.3 L1347.5 468.4Z" fill="#b0b0b0"/><path d="M1338.8 456.9 L1347.5 451.5 L1356.2 456.9 L1347.5 462.3Z" fill="#dedede"/>
<rect x="1338.5" y="479.6" width="10.4" height="13" fill="#474747" stroke="#cfcfcf" stroke-width="1"/><rect x="1342.8" y="486.2" width="13.4" height="10.6" fill="#474747" stroke="#cfcfcf" stroke-width="1"/>
</g>
</svg>
<span class="t" style="left:8.2px;top:4.0px;font-size:21.5px;color:#c58d60;font-weight:700;transform:scaleX(0.87);transform-origin:0 0;">Ai</span>
<span class="t" style="left:46.8px;top:9.4px;font-size:12.5px;color:#dedede;letter-spacing:0.02px;">Archivo</span>
<span class="t" style="left:105.0px;top:9.4px;font-size:12.5px;color:#dedede;letter-spacing:-0.32px;">Edición</span>
<span class="t" style="left:160.5px;top:9.4px;font-size:12.5px;color:#dedede;letter-spacing:0.01px;">Objeto</span>
<span class="t" style="left:214.8px;top:9.4px;font-size:12.5px;color:#dedede;letter-spacing:-0.07px;">Texto</span>
<span class="t" style="left:262.0px;top:9.4px;font-size:12.5px;color:#dedede;letter-spacing:-0.46px;">Seleccionar</span>
<span class="t" style="left:340.0px;top:9.4px;font-size:12.5px;color:#dedede;letter-spacing:-0.45px;">Efecto</span>
<span class="t" style="left:389.3px;top:9.4px;font-size:12.5px;color:#dedede;letter-spacing:-0.23px;">Ver</span>
<span class="t" style="left:424.6px;top:9.4px;font-size:12.5px;color:#dedede;letter-spacing:-0.32px;">Ventana</span>
<span class="t" style="left:485.3px;top:9.4px;font-size:12.5px;color:#dedede;letter-spacing:-0.10px;">Ayuda</span>
<span class="t" style="left:990.5px;top:8.6px;font-size:12.8px;color:#d6d6d6;letter-spacing:-0.64px;">Aspectos esenciales</span>
<span class="t" style="left:14.4px;top:42.1px;font-size:10.4px;color:#ececec;letter-spacing:-0.28px;text-shadow:0 0 0.6px #ececec;">No hay selección</span>
<span class="t" style="left:231.4px;top:42.6px;font-size:10.5px;color:#e8912d;letter-spacing:-0.25px;text-shadow:0 0 0.5px #e8912d;">Trazo:</span>
<span class="t" style="left:285.9px;top:42.3px;font-size:10.5px;color:#0c0c0c;letter-spacing:-0.01px;text-shadow:0 0 0.4px #0c0c0c;">1 pt</span>
<span class="t" style="left:487.5px;top:42.8px;font-size:10.5px;color:#0c0c0c;letter-spacing:-0.21px;text-shadow:0 0 0.4px #0c0c0c;">Ovalado 3 pt.</span>
<span class="t" style="left:577.7px;top:42.3px;font-size:10.5px;color:#e8912d;letter-spacing:-0.33px;text-shadow:0 0 0.5px #e8912d;">Opacidad:</span>
<span class="t" style="left:631.9px;top:42.3px;font-size:10.5px;color:#0c0c0c;letter-spacing:-0.59px;text-shadow:0 0 0.4px #0c0c0c;">100%</span>
<span class="t" style="left:702.6px;top:42.8px;font-size:10.5px;color:#ececec;letter-spacing:-0.25px;text-shadow:0 0 0.6px #ececec;">Estilo:</span>
<span class="t" style="left:792.0px;top:42.8px;font-size:10.5px;color:#ececec;letter-spacing:-0.16px;text-shadow:0 0 0.6px #ececec;">Ajustar documento</span>
<span class="t" style="left:900.5px;top:42.8px;font-size:10.5px;color:#ececec;letter-spacing:-0.37px;text-shadow:0 0 0.6px #ececec;">Preferencias</span>
<span class="t" style="left:82.7px;top:69.7px;font-size:11px;color:#e4e4e4;letter-spacing:-0.03px;font-weight:700;">rene.ai al 49,28% (CMYK/Previsualizar)</span>
<span class="t" style="left:1108.9px;top:81.1px;font-size:11px;color:#e8e8e8;letter-spacing:-0.81px;font-weight:700;">Color</span>
<span class="t" style="left:1148.5px;top:81.1px;font-size:11px;color:#9a9a9a;letter-spacing:-0.67px;font-weight:700;">Guía de col</span>
<span class="t" style="left:1207.7px;top:81.1px;font-size:11px;color:#9a9a9a;letter-spacing:-0.71px;font-weight:700;width:54px;overflow:hidden;">Temas de co</span>
<span class="t" style="left:110.5px;top:715.8px;font-size:10.5px;color:#0c0c0c;letter-spacing:-0.55px;text-shadow:0 0 0.4px #0c0c0c;">49,28%</span>
<span class="t" style="left:221.2px;top:715.8px;font-size:10.5px;color:#0c0c0c;letter-spacing:0.00px;text-shadow:0 0 0.4px #0c0c0c;">1</span>
<span class="t" style="left:553.1px;top:9.2px;font-size:10.5px;color:#747474;font-weight:700;transform:scaleX(0.82);transform-origin:0 0;">Br</span>
<span class="t" style="left:589.4px;top:9.2px;font-size:10.5px;color:#f2f2f2;font-weight:700;transform:scaleX(0.86);transform-origin:0 0;">St</span>
<span class="t" style="left:405.2px;top:715.6px;font-size:10.5px;color:#ececec;letter-spacing:-0.41px;text-shadow:0 0 0.6px #ececec;">Zoom</span>

</body>
</html>
